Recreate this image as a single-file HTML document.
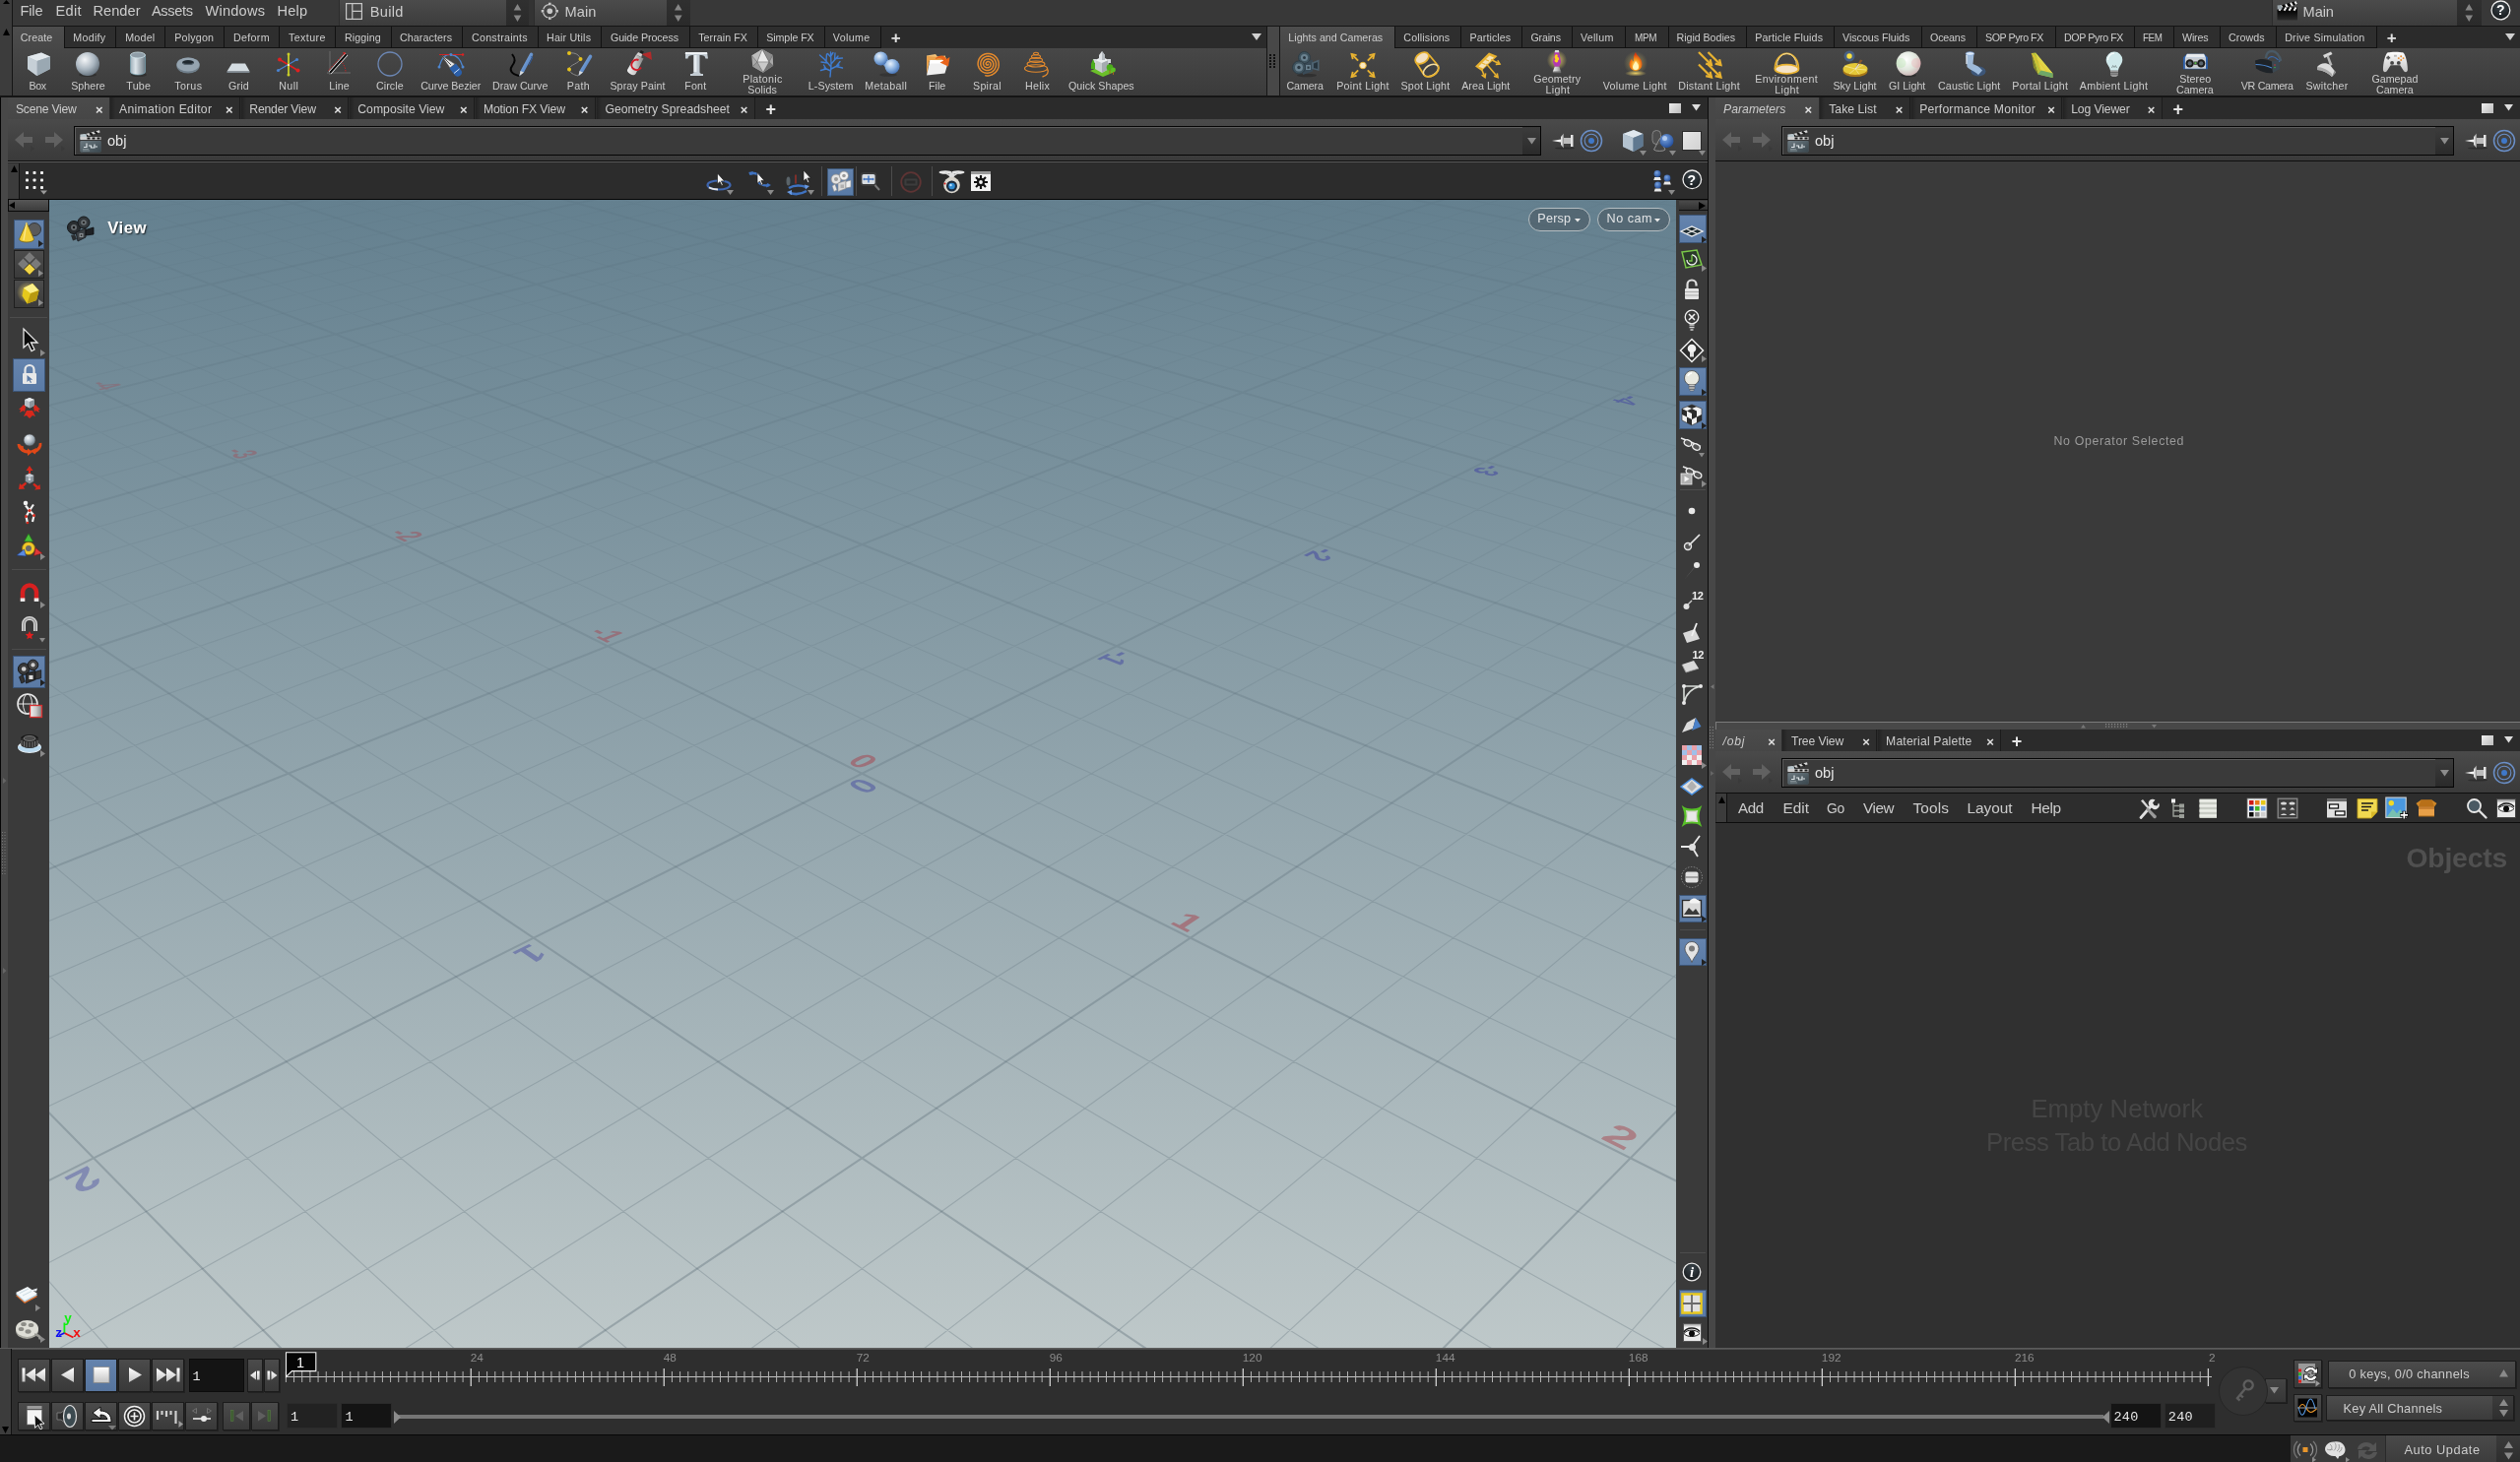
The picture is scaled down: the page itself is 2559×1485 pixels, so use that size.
<!DOCTYPE html>
<html lang="en"><head><meta charset="utf-8"><title>Houdini</title>
<style>
html,body{margin:0;padding:0;}
body{width:2559px;height:1485px;overflow:hidden;background:#3a3a3a;font-family:"Liberation Sans", sans-serif;position:relative;}
#app{position:absolute;left:0;top:0;width:2559px;height:1485px;overflow:hidden;will-change:transform;}
#app div,#app svg,#app span.t{position:absolute;box-sizing:border-box;}
#app svg{overflow:visible;}
span.t{white-space:nowrap;line-height:1;}
</style></head>
<body><div id="app">
<div style="left:0px;top:0px;width:2559px;height:26px;background:#383838;"></div>
<div style="left:0px;top:26px;width:2559px;height:1px;background:#151515;"></div>
<div style="left:0px;top:0px;width:12px;height:98px;background:#3c3c3c;"></div>
<div style="left:12px;top:0px;width:1px;height:98px;background:#151515;"></div>
<span class="t" style="top:4.45px;font-size:14.6px;color:#cccccc;left:20.50px;letter-spacing:-0.172px;">File</span>
<span class="t" style="top:4.45px;font-size:14.6px;color:#cccccc;left:56.50px;letter-spacing:0.281px;">Edit</span>
<span class="t" style="top:4.45px;font-size:14.6px;color:#cccccc;left:94.50px;letter-spacing:0.025px;">Render</span>
<span class="t" style="top:4.45px;font-size:14.6px;color:#cccccc;left:154.00px;letter-spacing:-0.359px;">Assets</span>
<span class="t" style="top:4.45px;font-size:14.6px;color:#cccccc;left:208.50px;letter-spacing:0.216px;">Windows</span>
<span class="t" style="top:4.45px;font-size:14.6px;color:#cccccc;left:281.50px;letter-spacing:0.161px;">Help</span>
<div style="left:344px;top:0px;width:192.5px;height:26px;background:linear-gradient(#4b4b4b,#3c3c3c);border-left:1px solid #2c2c2c;"></div>
<div style="left:513.5px;top:0px;width:23.0px;height:26px;background:linear-gradient(#303030,#2a2a2a);"></div>
<svg style="left:513.5px;top:0px;" width="23.0" height="26" viewBox="0 0 23.0 26"><path d="M7.7 10.5 l3.8 -6.5 l3.8 6.5z M7.7 15.5 l3.8 6.5 l3.8 -6.5z" fill="#858585"/></svg>
<span class="t" style="top:4.75px;font-size:14.6px;color:#cccccc;left:375.70px;letter-spacing:0.337px;">Build</span>
<div style="left:536.5px;top:0px;width:5.5px;height:26px;background:#333;"></div>
<div style="left:542px;top:0px;width:158.5px;height:26px;background:linear-gradient(#4b4b4b,#3c3c3c);border-left:1px solid #2c2c2c;"></div>
<div style="left:677px;top:0px;width:23.5px;height:26px;background:linear-gradient(#303030,#2a2a2a);"></div>
<svg style="left:677px;top:0px;" width="23.5" height="26" viewBox="0 0 23.5 26"><path d="M7.95 10.5 l3.8 -6.5 l3.8 6.5z M7.95 15.5 l3.8 6.5 l3.8 -6.5z" fill="#858585"/></svg>
<span class="t" style="top:4.75px;font-size:14.6px;color:#cccccc;left:573.60px;letter-spacing:0.020px;">Main</span>
<div style="left:2306.5px;top:0px;width:213.0px;height:26px;background:linear-gradient(#4b4b4b,#3c3c3c);border-left:1px solid #2c2c2c;"></div>
<div style="left:2495px;top:0px;width:24.5px;height:26px;background:linear-gradient(#303030,#2a2a2a);"></div>
<svg style="left:2495px;top:0px;" width="24.5" height="26" viewBox="0 0 24.5 26"><path d="M8.45 10.5 l3.8 -6.5 l3.8 6.5z M8.45 15.5 l3.8 6.5 l3.8 -6.5z" fill="#858585"/></svg>
<span class="t" style="top:4.75px;font-size:14.6px;color:#cccccc;left:2338.60px;letter-spacing:-0.080px;">Main</span>
<svg style="left:351px;top:3px;" width="17" height="17" viewBox="0 0 17 17"><rect x="0.600" y="0.600" width="15.800" height="15.800" fill="none" stroke="#c8c8c8" stroke-width="1.200"/><path d="M6.800 0.600v15.800M6.800 8.300h9.600" stroke="#c8c8c8" stroke-width="1.200"/></svg>
<svg style="left:548.5px;top:2px;" width="19" height="19" viewBox="0 0 19 19"><circle cx="9.300" cy="9.300" r="6.800" fill="none" stroke="#c8c8c8" stroke-width="1.200" stroke-dasharray="7.200 3.500" stroke-dashoffset="-1.800"/><circle cx="9.300" cy="9.300" r="2.800" fill="#c8c8c8"/><rect x="8" y="0.700" width="2.600" height="2.600" fill="#c8c8c8"/><rect x="8" y="15.300" width="2.600" height="2.600" fill="#c8c8c8"/><rect x="0.700" y="8" width="2.600" height="2.600" fill="#c8c8c8"/><rect x="15.300" y="8" width="2.600" height="2.600" fill="#c8c8c8"/></svg>
<svg style="left:2311.5px;top:0px;" width="22" height="22" viewBox="0 0 22 22"><defs><linearGradient id="gClapB" x1="0" y1="0" x2="0" y2="1"><stop offset="0" stop-color="#030303"/><stop offset="1" stop-color="#2c2c2c"/></linearGradient></defs><rect x="0.500" y="10.500" width="20.500" height="10" fill="url(#gClapB)"/><path d="M0.500 6.500l19.500 -5.500l0.800 3.200l-19.500 5.500z" fill="#0a0a0a"/><path d="M4 5.500l2 3.300M9 4.200l2 3.300M14 2.800l2 3.300M18.500 1.500l1.500 2.800" stroke="#f4f4f4" stroke-width="2"/><rect x="0.500" y="7.500" width="20.500" height="3.300" fill="#0a0a0a"/><path d="M4.500 7.500l-2 3.300M9.500 7.500l-2 3.300M14.500 7.500l-2 3.300M19.500 7.500l-2 3.300" stroke="#f4f4f4" stroke-width="2"/><path d="M0.500 5.500l4 -0.500l1 4.500h-5z" fill="#9aa4aa"/></svg>
<div style="left:13px;top:27px;width:1273px;height:22px;background:#2b2b2b;"></div>
<div style="left:13px;top:49px;width:1273px;height:48px;background:linear-gradient(#474747,#3b3b3b);"></div>
<div style="left:13px;top:27px;width:52px;height:23px;background:linear-gradient(#4d4d4d,#474747);"></div>
<span class="t" style="top:33.24px;font-size:10.7px;color:#cccccc;left:20.80px;letter-spacing:0.081px;">Create</span>
<div style="left:65px;top:27px;width:53px;height:22px;background:#2e2e2e;border:1px solid #111;border-top:none;"></div>
<span class="t" style="top:33.24px;font-size:10.7px;color:#cccccc;left:74.20px;letter-spacing:0.303px;">Modify</span>
<div style="left:117px;top:27px;width:51px;height:22px;background:#2e2e2e;border:1px solid #111;border-top:none;"></div>
<span class="t" style="top:33.24px;font-size:10.7px;color:#cccccc;left:127.20px;letter-spacing:0.223px;">Model</span>
<div style="left:167px;top:27px;width:61px;height:22px;background:#2e2e2e;border:1px solid #111;border-top:none;"></div>
<span class="t" style="top:33.24px;font-size:10.7px;color:#cccccc;left:177.20px;letter-spacing:0.196px;">Polygon</span>
<div style="left:227px;top:27px;width:57px;height:22px;background:#2e2e2e;border:1px solid #111;border-top:none;"></div>
<span class="t" style="top:33.24px;font-size:10.7px;color:#cccccc;left:237.00px;letter-spacing:0.311px;">Deform</span>
<div style="left:283px;top:27px;width:58px;height:22px;background:#2e2e2e;border:1px solid #111;border-top:none;"></div>
<span class="t" style="top:33.24px;font-size:10.7px;color:#cccccc;left:293.00px;letter-spacing:0.409px;">Texture</span>
<div style="left:340px;top:27px;width:58px;height:22px;background:#2e2e2e;border:1px solid #111;border-top:none;"></div>
<span class="t" style="top:33.24px;font-size:10.7px;color:#cccccc;left:350.00px;letter-spacing:0.075px;">Rigging</span>
<div style="left:397px;top:27px;width:73px;height:22px;background:#2e2e2e;border:1px solid #111;border-top:none;"></div>
<span class="t" style="top:33.24px;font-size:10.7px;color:#cccccc;left:406.00px;letter-spacing:0.080px;">Characters</span>
<div style="left:469px;top:27px;width:78px;height:22px;background:#2e2e2e;border:1px solid #111;border-top:none;"></div>
<span class="t" style="top:33.24px;font-size:10.7px;color:#cccccc;left:479.00px;letter-spacing:0.244px;">Constraints</span>
<div style="left:546px;top:27px;width:65px;height:22px;background:#2e2e2e;border:1px solid #111;border-top:none;"></div>
<span class="t" style="top:33.24px;font-size:10.7px;color:#cccccc;left:555.00px;letter-spacing:0.182px;">Hair Utils</span>
<div style="left:610px;top:27px;width:91px;height:22px;background:#2e2e2e;border:1px solid #111;border-top:none;"></div>
<span class="t" style="top:33.24px;font-size:10.7px;color:#cccccc;left:620.00px;letter-spacing:-0.092px;">Guide Process</span>
<div style="left:700px;top:27px;width:70px;height:22px;background:#2e2e2e;border:1px solid #111;border-top:none;"></div>
<span class="t" style="top:33.24px;font-size:10.7px;color:#cccccc;left:709.20px;letter-spacing:0.045px;">Terrain FX</span>
<div style="left:769px;top:27px;width:69px;height:22px;background:#2e2e2e;border:1px solid #111;border-top:none;"></div>
<span class="t" style="top:33.24px;font-size:10.7px;color:#cccccc;left:778.30px;letter-spacing:-0.112px;">Simple FX</span>
<div style="left:837px;top:27px;width:58px;height:22px;background:#2e2e2e;border:1px solid #111;border-top:none;"></div>
<span class="t" style="top:33.24px;font-size:10.7px;color:#cccccc;left:845.80px;letter-spacing:0.369px;">Volume</span>
<span class="t" style="top:30.11px;font-size:17px;color:#e0e0e0;left:909.70px;transform:translateX(-50%);font-weight:bold;">+</span>
<svg style="left:1270.5px;top:34px;" width="10" height="8" viewBox="0 0 10 8"><path d="M0 0h10l-5 7z" fill="#d0d0d0"/></svg>
<div style="left:1286px;top:27px;width:1px;height:71px;background:#151515;"></div>
<div style="left:1287px;top:27px;width:12px;height:71px;background:#484848;"></div>
<div style="left:1299px;top:27px;width:1px;height:71px;background:#151515;"></div>
<svg style="left:1289px;top:55px;" width="8" height="16" viewBox="0 0 8 16"><rect x="0" y="0" width="2" height="2" fill="#111"/><rect x="0" y="3" width="2" height="2" fill="#111"/><rect x="0" y="6" width="2" height="2" fill="#111"/><rect x="0" y="9" width="2" height="2" fill="#111"/><rect x="0" y="12" width="2" height="2" fill="#111"/><rect x="4" y="0" width="2" height="2" fill="#111"/><rect x="4" y="3" width="2" height="2" fill="#111"/><rect x="4" y="6" width="2" height="2" fill="#111"/><rect x="4" y="9" width="2" height="2" fill="#111"/><rect x="4" y="12" width="2" height="2" fill="#111"/></svg>
<div style="left:1300px;top:27px;width:1259px;height:22px;background:#2b2b2b;"></div>
<div style="left:1300px;top:49px;width:1259px;height:48px;background:linear-gradient(#474747,#3b3b3b);"></div>
<div style="left:1300px;top:27px;width:116px;height:23px;background:linear-gradient(#4d4d4d,#474747);"></div>
<span class="t" style="top:33.24px;font-size:10.7px;color:#cccccc;left:1308.30px;letter-spacing:0.014px;">Lights and Cameras</span>
<div style="left:1416px;top:27px;width:68px;height:22px;background:#2e2e2e;border:1px solid #111;border-top:none;"></div>
<span class="t" style="top:33.24px;font-size:10.7px;color:#cccccc;left:1425.30px;letter-spacing:0.128px;">Collisions</span>
<div style="left:1483px;top:27px;width:63px;height:22px;background:#2e2e2e;border:1px solid #111;border-top:none;"></div>
<span class="t" style="top:33.24px;font-size:10.7px;color:#cccccc;left:1492.50px;letter-spacing:0.089px;">Particles</span>
<div style="left:1545px;top:27px;width:52px;height:22px;background:#2e2e2e;border:1px solid #111;border-top:none;"></div>
<span class="t" style="top:33.24px;font-size:10.7px;color:#cccccc;left:1554.40px;letter-spacing:-0.177px;">Grains</span>
<div style="left:1596px;top:27px;width:55px;height:22px;background:#2e2e2e;border:1px solid #111;border-top:none;"></div>
<span class="t" style="top:33.24px;font-size:10.7px;color:#cccccc;left:1605.00px;letter-spacing:0.244px;">Vellum</span>
<div style="left:1650px;top:27px;width:45px;height:22px;background:#2e2e2e;border:1px solid #111;border-top:none;"></div>
<span class="t" style="top:33.24px;font-size:10.7px;color:#cccccc;left:1659.70px;transform-origin:0 0;transform:scaleX(0.9348);letter-spacing:-0.450px;">MPM</span>
<div style="left:1694px;top:27px;width:80px;height:22px;background:#2e2e2e;border:1px solid #111;border-top:none;"></div>
<span class="t" style="top:33.24px;font-size:10.7px;color:#cccccc;left:1702.50px;letter-spacing:-0.047px;">Rigid Bodies</span>
<div style="left:1773px;top:27px;width:90px;height:22px;background:#2e2e2e;border:1px solid #111;border-top:none;"></div>
<span class="t" style="top:33.24px;font-size:10.7px;color:#cccccc;left:1782.20px;letter-spacing:0.120px;">Particle Fluids</span>
<div style="left:1862px;top:27px;width:90px;height:22px;background:#2e2e2e;border:1px solid #111;border-top:none;"></div>
<span class="t" style="top:33.24px;font-size:10.7px;color:#cccccc;left:1871.00px;letter-spacing:-0.025px;">Viscous Fluids</span>
<div style="left:1951px;top:27px;width:57px;height:22px;background:#2e2e2e;border:1px solid #111;border-top:none;"></div>
<span class="t" style="top:33.24px;font-size:10.7px;color:#cccccc;left:1960.00px;letter-spacing:-0.169px;">Oceans</span>
<div style="left:2007px;top:27px;width:81px;height:22px;background:#2e2e2e;border:1px solid #111;border-top:none;"></div>
<span class="t" style="top:33.24px;font-size:10.7px;color:#cccccc;left:2016.40px;transform-origin:0 0;transform:scaleX(0.9974);letter-spacing:-0.450px;">SOP Pyro FX</span>
<div style="left:2087px;top:27px;width:81px;height:22px;background:#2e2e2e;border:1px solid #111;border-top:none;"></div>
<span class="t" style="top:33.24px;font-size:10.7px;color:#cccccc;left:2096.00px;letter-spacing:-0.405px;">DOP Pyro FX</span>
<div style="left:2167px;top:27px;width:41px;height:22px;background:#2e2e2e;border:1px solid #111;border-top:none;"></div>
<span class="t" style="top:33.24px;font-size:10.7px;color:#cccccc;left:2176.40px;transform-origin:0 0;transform:scaleX(0.9169);letter-spacing:-0.450px;">FEM</span>
<div style="left:2207px;top:27px;width:48px;height:22px;background:#2e2e2e;border:1px solid #111;border-top:none;"></div>
<span class="t" style="top:33.24px;font-size:10.7px;color:#cccccc;left:2216.00px;letter-spacing:-0.178px;">Wires</span>
<div style="left:2254px;top:27px;width:58px;height:22px;background:#2e2e2e;border:1px solid #111;border-top:none;"></div>
<span class="t" style="top:33.24px;font-size:10.7px;color:#cccccc;left:2263.00px;letter-spacing:0.073px;">Crowds</span>
<div style="left:2311px;top:27px;width:103px;height:22px;background:#2e2e2e;border:1px solid #111;border-top:none;"></div>
<span class="t" style="top:33.24px;font-size:10.7px;color:#cccccc;left:2320.20px;letter-spacing:0.219px;">Drive Simulation</span>
<span class="t" style="top:30.11px;font-size:17px;color:#e0e0e0;left:2428.80px;transform:translateX(-50%);font-weight:bold;">+</span>
<svg style="left:2543.5px;top:34px;" width="10" height="8" viewBox="0 0 10 8"><path d="M0 0h10l-5 7z" fill="#d0d0d0"/></svg>
<div style="left:0px;top:97px;width:2559px;height:2px;background:#151515;"></div>
<span class="t" style="top:82.24px;font-size:10.7px;color:#cccccc;left:29.40px;letter-spacing:-0.311px;">Box</span>
<span class="t" style="top:82.24px;font-size:10.7px;color:#cccccc;left:72.20px;letter-spacing:0.006px;">Sphere</span>
<span class="t" style="top:82.24px;font-size:10.7px;color:#cccccc;left:128.30px;letter-spacing:0.244px;">Tube</span>
<span class="t" style="top:82.24px;font-size:10.7px;color:#cccccc;left:177.20px;letter-spacing:0.415px;">Torus</span>
<span class="t" style="top:82.24px;font-size:10.7px;color:#cccccc;left:232.00px;letter-spacing:0.199px;">Grid</span>
<span class="t" style="top:82.24px;font-size:10.7px;color:#cccccc;left:283.30px;letter-spacing:0.359px;">Null</span>
<span class="t" style="top:82.24px;font-size:10.7px;color:#cccccc;left:334.20px;letter-spacing:0.094px;">Line</span>
<span class="t" style="top:82.24px;font-size:10.7px;color:#cccccc;left:382.00px;letter-spacing:0.074px;">Circle</span>
<span class="t" style="top:82.24px;font-size:10.7px;color:#cccccc;left:427.20px;letter-spacing:-0.062px;">Curve Bezier</span>
<span class="t" style="top:82.24px;font-size:10.7px;color:#cccccc;left:500.00px;letter-spacing:-0.002px;">Draw Curve</span>
<span class="t" style="top:82.24px;font-size:10.7px;color:#cccccc;left:575.80px;letter-spacing:0.267px;">Path</span>
<span class="t" style="top:82.24px;font-size:10.7px;color:#cccccc;left:619.40px;letter-spacing:0.095px;">Spray Paint</span>
<span class="t" style="top:82.24px;font-size:10.7px;color:#cccccc;left:695.30px;letter-spacing:0.170px;">Font</span>
<span class="t" style="top:82.24px;font-size:10.7px;color:#cccccc;left:820.80px;letter-spacing:0.066px;">L-System</span>
<span class="t" style="top:82.24px;font-size:10.7px;color:#cccccc;left:878.30px;letter-spacing:0.299px;">Metaball</span>
<span class="t" style="top:82.24px;font-size:10.7px;color:#cccccc;left:943.00px;letter-spacing:0.022px;">File</span>
<span class="t" style="top:82.24px;font-size:10.7px;color:#cccccc;left:988.00px;letter-spacing:0.274px;">Spiral</span>
<span class="t" style="top:82.24px;font-size:10.7px;color:#cccccc;left:1041.00px;letter-spacing:0.259px;">Helix</span>
<span class="t" style="top:82.24px;font-size:10.7px;color:#cccccc;left:1085.00px;letter-spacing:0.014px;">Quick Shapes</span>
<span class="t" style="top:82.24px;font-size:10.7px;color:#cccccc;left:1306.40px;letter-spacing:-0.083px;">Camera</span>
<span class="t" style="top:82.24px;font-size:10.7px;color:#cccccc;left:1357.20px;letter-spacing:0.288px;">Point Light</span>
<span class="t" style="top:82.24px;font-size:10.7px;color:#cccccc;left:1422.50px;letter-spacing:0.173px;">Spot Light</span>
<span class="t" style="top:82.24px;font-size:10.7px;color:#cccccc;left:1484.20px;letter-spacing:0.041px;">Area Light</span>
<span class="t" style="top:82.24px;font-size:10.7px;color:#cccccc;left:1627.80px;letter-spacing:0.264px;">Volume Light</span>
<span class="t" style="top:82.24px;font-size:10.7px;color:#cccccc;left:1704.20px;letter-spacing:0.257px;">Distant Light</span>
<span class="t" style="top:82.24px;font-size:10.7px;color:#cccccc;left:1861.40px;letter-spacing:0.029px;">Sky Light</span>
<span class="t" style="top:82.24px;font-size:10.7px;color:#cccccc;left:1918.00px;letter-spacing:-0.020px;">GI Light</span>
<span class="t" style="top:82.24px;font-size:10.7px;color:#cccccc;left:1968.00px;letter-spacing:0.125px;">Caustic Light</span>
<span class="t" style="top:82.24px;font-size:10.7px;color:#cccccc;left:2043.30px;letter-spacing:0.238px;">Portal Light</span>
<span class="t" style="top:82.24px;font-size:10.7px;color:#cccccc;left:2111.80px;letter-spacing:0.320px;">Ambient Light</span>
<span class="t" style="top:82.24px;font-size:10.7px;color:#cccccc;left:2275.80px;letter-spacing:-0.329px;">VR Camera</span>
<span class="t" style="top:82.24px;font-size:10.7px;color:#cccccc;left:2341.40px;letter-spacing:0.274px;">Switcher</span>
<span class="t" style="top:75.24px;font-size:10.7px;color:#cccccc;left:754.20px;letter-spacing:0.310px;">Platonic</span>
<span class="t" style="top:86.24px;font-size:10.7px;color:#cccccc;left:759.20px;letter-spacing:0.118px;">Solids</span>
<span class="t" style="top:75.24px;font-size:10.7px;color:#cccccc;left:1557.20px;letter-spacing:0.125px;">Geometry</span>
<span class="t" style="top:86.24px;font-size:10.7px;color:#cccccc;left:1569.40px;letter-spacing:0.353px;">Light</span>
<span class="t" style="top:75.24px;font-size:10.7px;color:#cccccc;left:1782.20px;letter-spacing:0.360px;">Environment</span>
<span class="t" style="top:86.24px;font-size:10.7px;color:#cccccc;left:1802.20px;letter-spacing:0.328px;">Light</span>
<span class="t" style="top:75.24px;font-size:10.7px;color:#cccccc;left:2213.30px;letter-spacing:0.080px;">Stereo</span>
<span class="t" style="top:86.24px;font-size:10.7px;color:#cccccc;left:2210.00px;letter-spacing:-0.043px;">Camera</span>
<span class="t" style="top:75.24px;font-size:10.7px;color:#cccccc;left:2408.40px;letter-spacing:0.010px;">Gamepad</span>
<span class="t" style="top:86.24px;font-size:10.7px;color:#cccccc;left:2413.00px;letter-spacing:-0.063px;">Camera</span>
<div style="left:0px;top:99px;width:8px;height:1272px;background:#484848;border-left:1px solid #050505;"></div>
<div style="left:8px;top:99px;width:1726px;height:22px;background:#2b2b2b;"></div>
<div style="left:8px;top:99px;width:103px;height:23px;background:linear-gradient(#4b4b4b,#464646);"></div>
<span class="t" style="top:104.90px;font-size:12.2px;color:#cccccc;left:16.00px;letter-spacing:-0.260px;">Scene View</span>
<span class="t" style="top:104.68px;font-size:13px;color:#e0e0e0;left:100.80px;transform:translateX(-50%);font-weight:bold;">×</span>
<div style="left:112px;top:99px;width:132px;height:22px;background:linear-gradient(90deg,#222 0,#2e2e2e 5px,#2e2e2e 100%);border-right:1px solid #1c1c1c;"></div>
<span class="t" style="top:104.90px;font-size:12.2px;color:#cccccc;left:121.00px;letter-spacing:0.305px;">Animation Editor</span>
<span class="t" style="top:104.68px;font-size:13px;color:#e0e0e0;left:232.80px;transform:translateX(-50%);font-weight:bold;">×</span>
<div style="left:245px;top:99px;width:109px;height:22px;background:linear-gradient(90deg,#222 0,#2e2e2e 5px,#2e2e2e 100%);border-right:1px solid #1c1c1c;"></div>
<span class="t" style="top:104.90px;font-size:12.2px;color:#cccccc;left:253.30px;letter-spacing:-0.186px;">Render View</span>
<span class="t" style="top:104.68px;font-size:13px;color:#e0e0e0;left:343.00px;transform:translateX(-50%);font-weight:bold;">×</span>
<div style="left:355px;top:99px;width:127px;height:22px;background:linear-gradient(90deg,#222 0,#2e2e2e 5px,#2e2e2e 100%);border-right:1px solid #1c1c1c;"></div>
<span class="t" style="top:104.90px;font-size:12.2px;color:#cccccc;left:363.30px;letter-spacing:0.020px;">Composite View</span>
<span class="t" style="top:104.68px;font-size:13px;color:#e0e0e0;left:470.80px;transform:translateX(-50%);font-weight:bold;">×</span>
<div style="left:483px;top:99px;width:122px;height:22px;background:linear-gradient(90deg,#222 0,#2e2e2e 5px,#2e2e2e 100%);border-right:1px solid #1c1c1c;"></div>
<span class="t" style="top:104.90px;font-size:12.2px;color:#cccccc;left:491.00px;letter-spacing:-0.163px;">Motion FX View</span>
<span class="t" style="top:104.68px;font-size:13px;color:#e0e0e0;left:593.60px;transform:translateX(-50%);font-weight:bold;">×</span>
<div style="left:606px;top:99px;width:161px;height:22px;background:linear-gradient(90deg,#222 0,#2e2e2e 5px,#2e2e2e 100%);border-right:1px solid #1c1c1c;"></div>
<span class="t" style="top:104.90px;font-size:12.2px;color:#cccccc;left:614.40px;letter-spacing:0.031px;">Geometry Spreadsheet</span>
<span class="t" style="top:104.68px;font-size:13px;color:#e0e0e0;left:755.60px;transform:translateX(-50%);font-weight:bold;">×</span>
<span class="t" style="top:101.72px;font-size:18px;color:#e6e6e6;left:782.80px;transform:translateX(-50%);font-weight:bold;">+</span>
<div style="left:1695px;top:105px;width:12px;height:10px;background:linear-gradient(135deg,#eee,#bbb);"></div>
<svg style="left:1718px;top:106px;" width="9" height="8" viewBox="0 0 9 8"><path d="M0 0h9l-4.5 6.5z" fill="#ddd"/></svg>
<div style="left:1742px;top:99px;width:817px;height:22px;background:#2b2b2b;"></div>
<div style="left:1742px;top:99px;width:105px;height:23px;background:linear-gradient(#4b4b4b,#464646);"></div>
<span class="t" style="top:104.90px;font-size:12.2px;color:#cccccc;left:1750.00px;font-style:italic;letter-spacing:0.033px;">Parameters</span>
<span class="t" style="top:104.68px;font-size:13px;color:#e0e0e0;left:1836.40px;transform:translateX(-50%);font-weight:bold;">×</span>
<div style="left:1848px;top:99px;width:92px;height:22px;background:linear-gradient(90deg,#222 0,#2e2e2e 5px,#2e2e2e 100%);border-right:1px solid #1c1c1c;"></div>
<span class="t" style="top:104.90px;font-size:12.2px;color:#cccccc;left:1857.20px;letter-spacing:0.036px;">Take List</span>
<span class="t" style="top:104.68px;font-size:13px;color:#e0e0e0;left:1928.60px;transform:translateX(-50%);font-weight:bold;">×</span>
<div style="left:1941px;top:99px;width:153px;height:22px;background:linear-gradient(90deg,#222 0,#2e2e2e 5px,#2e2e2e 100%);border-right:1px solid #1c1c1c;"></div>
<span class="t" style="top:104.90px;font-size:12.2px;color:#cccccc;left:1949.20px;letter-spacing:0.211px;">Performance Monitor</span>
<span class="t" style="top:104.68px;font-size:13px;color:#e0e0e0;left:2083.00px;transform:translateX(-50%);font-weight:bold;">×</span>
<div style="left:2095px;top:99px;width:101px;height:22px;background:linear-gradient(90deg,#222 0,#2e2e2e 5px,#2e2e2e 100%);border-right:1px solid #1c1c1c;"></div>
<span class="t" style="top:104.90px;font-size:12.2px;color:#cccccc;left:2103.20px;letter-spacing:-0.130px;">Log Viewer</span>
<span class="t" style="top:104.68px;font-size:13px;color:#e0e0e0;left:2184.50px;transform:translateX(-50%);font-weight:bold;">×</span>
<span class="t" style="top:101.72px;font-size:18px;color:#e6e6e6;left:2211.70px;transform:translateX(-50%);font-weight:bold;">+</span>
<div style="left:2520px;top:105px;width:12px;height:10px;background:linear-gradient(135deg,#eee,#bbb);"></div>
<svg style="left:2543px;top:106px;" width="9" height="8" viewBox="0 0 9 8"><path d="M0 0h9l-4.5 6.5z" fill="#ddd"/></svg>
<div style="left:1742px;top:741px;width:817px;height:22px;background:#2b2b2b;"></div>
<div style="left:1742px;top:741px;width:67px;height:23px;background:linear-gradient(#4b4b4b,#464646);"></div>
<span class="t" style="top:746.90px;font-size:12.2px;color:#cccccc;left:1749.50px;font-style:italic;letter-spacing:0.748px;">/obj</span>
<span class="t" style="top:746.68px;font-size:13px;color:#e0e0e0;left:1799.00px;transform:translateX(-50%);font-weight:bold;">×</span>
<div style="left:1810px;top:741px;width:96px;height:22px;background:linear-gradient(90deg,#222 0,#2e2e2e 5px,#2e2e2e 100%);border-right:1px solid #1c1c1c;"></div>
<span class="t" style="top:746.90px;font-size:12.2px;color:#cccccc;left:1819.00px;letter-spacing:-0.113px;">Tree View</span>
<span class="t" style="top:746.68px;font-size:13px;color:#e0e0e0;left:1895.00px;transform:translateX(-50%);font-weight:bold;">×</span>
<div style="left:1907px;top:741px;width:125px;height:22px;background:linear-gradient(90deg,#222 0,#2e2e2e 5px,#2e2e2e 100%);border-right:1px solid #1c1c1c;"></div>
<span class="t" style="top:746.90px;font-size:12.2px;color:#cccccc;left:1915.10px;letter-spacing:0.168px;">Material Palette</span>
<span class="t" style="top:746.68px;font-size:13px;color:#e0e0e0;left:2021.00px;transform:translateX(-50%);font-weight:bold;">×</span>
<span class="t" style="top:743.72px;font-size:18px;color:#e6e6e6;left:2048.00px;transform:translateX(-50%);font-weight:bold;">+</span>
<div style="left:2520px;top:747px;width:12px;height:10px;background:linear-gradient(135deg,#eee,#bbb);"></div>
<svg style="left:2543px;top:748px;" width="9" height="8" viewBox="0 0 9 8"><path d="M0 0h9l-4.5 6.5z" fill="#ddd"/></svg>
<svg width="0" height="0" style="left:0;top:0"><defs><linearGradient id="clg" x1="0" y1="0" x2="1" y2="1"><stop offset="0" stop-color="#6e7b82"/><stop offset="1" stop-color="#39464d"/></linearGradient></defs></svg>
<div style="left:8px;top:121px;width:1726px;height:42px;background:linear-gradient(#4a4a4a,#3a3a3a);"></div>
<div style="left:8px;top:163px;width:1726px;height:1px;background:#0e0e0e;"></div>
<svg style="left:14.5px;top:134.3px;" width="22" height="20" viewBox="0 0 22 20"><path d="M18 5h-9v-5l-9 8l9 8v-5h9z" fill="#616161"/><path d="M16 14l4 3l-4 3z" fill="#3a3a3a"/></svg>
<svg style="left:45.7px;top:134.3px;" width="22" height="20" viewBox="0 0 22 20"><path d="M0 5h9v-5l9 8l-9 8v-5h-9z" fill="#616161"/><path d="M16 14l4 3l-4 3z" fill="#3a3a3a"/></svg>
<div style="left:75px;top:128px;width:1490px;height:30px;background:#3a3a3a;border:1px solid #050505;box-shadow:inset 1px 1px 0 #5e5e5e;"></div>
<div style="left:1546px;top:129px;width:18px;height:28px;background:linear-gradient(#3c3c3c,#2a2a2a);"></div>
<svg style="left:1551px;top:140px;" width="9" height="7" viewBox="0 0 9 7"><path d="M0 0h9l-4.5 6.5z" fill="#8c8c8c"/></svg>
<svg style="left:81px;top:130.5px;" width="24" height="26" viewBox="0 0 24 26"><g transform="translate(0 0) scale(1)"><path d="M0.5 6.5 L20 1.2 L20.6 3.6 L1.2 8.9z" fill="#d8d8d8"/><path d="M5 5.3l3 2.2M10 4l3 2.2M15 2.6l3 2.2" stroke="#1a1a1a" stroke-width="2.2"/><path d="M0.5 5.5l6 -0.5l1.5 5.5h-7.5z" fill="#b9c6cc"/><rect x="0.5" y="8" width="21" height="3" fill="#cfcfcf"/><path d="M7.5 9.5h13" stroke="#1a1a1a" stroke-width="1.8" stroke-dasharray="3 2"/><rect x="0.5" y="12" width="21" height="11.5" rx="1" fill="#54636b"/><rect x="0.5" y="12" width="21" height="11.5" rx="1" fill="url(#clg)"/><path d="M4 18.5h3v-4M9 17h2.5v2h3.5v-3.5M16 18h2" stroke="#dfe5e8" stroke-width="1.2" fill="none"/><path d="M3 20.5h6M3 22h7" stroke="#8e999e" stroke-width="0.8"/></g></svg>
<span class="t" style="top:135.95px;font-size:14.6px;color:#e6e6e6;left:109.00px;letter-spacing:0.008px;">obj</span>
<div style="left:1742px;top:121px;width:817px;height:42px;background:linear-gradient(#4a4a4a,#3a3a3a);"></div>
<div style="left:1742px;top:163px;width:817px;height:1px;background:#0e0e0e;"></div>
<svg style="left:1748.5px;top:134.3px;" width="22" height="20" viewBox="0 0 22 20"><path d="M18 5h-9v-5l-9 8l9 8v-5h9z" fill="#616161"/><path d="M16 14l4 3l-4 3z" fill="#3a3a3a"/></svg>
<svg style="left:1779.7px;top:134.3px;" width="22" height="20" viewBox="0 0 22 20"><path d="M0 5h9v-5l9 8l-9 8v-5h-9z" fill="#616161"/><path d="M16 14l4 3l-4 3z" fill="#3a3a3a"/></svg>
<div style="left:1809px;top:128px;width:683px;height:30px;background:#3a3a3a;border:1px solid #050505;box-shadow:inset 1px 1px 0 #5e5e5e;"></div>
<div style="left:2473px;top:129px;width:18px;height:28px;background:linear-gradient(#3c3c3c,#2a2a2a);"></div>
<svg style="left:2478px;top:140px;" width="9" height="7" viewBox="0 0 9 7"><path d="M0 0h9l-4.5 6.5z" fill="#8c8c8c"/></svg>
<svg style="left:1815px;top:130.5px;" width="24" height="26" viewBox="0 0 24 26"><g transform="translate(0 0) scale(1)"><path d="M0.5 6.5 L20 1.2 L20.6 3.6 L1.2 8.9z" fill="#d8d8d8"/><path d="M5 5.3l3 2.2M10 4l3 2.2M15 2.6l3 2.2" stroke="#1a1a1a" stroke-width="2.2"/><path d="M0.5 5.5l6 -0.5l1.5 5.5h-7.5z" fill="#b9c6cc"/><rect x="0.5" y="8" width="21" height="3" fill="#cfcfcf"/><path d="M7.5 9.5h13" stroke="#1a1a1a" stroke-width="1.8" stroke-dasharray="3 2"/><rect x="0.5" y="12" width="21" height="11.5" rx="1" fill="#54636b"/><rect x="0.5" y="12" width="21" height="11.5" rx="1" fill="url(#clg)"/><path d="M4 18.5h3v-4M9 17h2.5v2h3.5v-3.5M16 18h2" stroke="#dfe5e8" stroke-width="1.2" fill="none"/><path d="M3 20.5h6M3 22h7" stroke="#8e999e" stroke-width="0.8"/></g></svg>
<span class="t" style="top:135.95px;font-size:14.6px;color:#e6e6e6;left:1843.00px;letter-spacing:0.008px;">obj</span>
<div style="left:1742px;top:763px;width:817px;height:42px;background:linear-gradient(#4a4a4a,#3a3a3a);"></div>
<div style="left:1742px;top:805px;width:817px;height:1px;background:#0e0e0e;"></div>
<svg style="left:1748.5px;top:776.3px;" width="22" height="20" viewBox="0 0 22 20"><path d="M18 5h-9v-5l-9 8l9 8v-5h9z" fill="#616161"/><path d="M16 14l4 3l-4 3z" fill="#3a3a3a"/></svg>
<svg style="left:1779.7px;top:776.3px;" width="22" height="20" viewBox="0 0 22 20"><path d="M0 5h9v-5l9 8l-9 8v-5h-9z" fill="#616161"/><path d="M16 14l4 3l-4 3z" fill="#3a3a3a"/></svg>
<div style="left:1809px;top:770px;width:683px;height:30px;background:#3a3a3a;border:1px solid #050505;box-shadow:inset 1px 1px 0 #5e5e5e;"></div>
<div style="left:2473px;top:771px;width:18px;height:28px;background:linear-gradient(#3c3c3c,#2a2a2a);"></div>
<svg style="left:2478px;top:782px;" width="9" height="7" viewBox="0 0 9 7"><path d="M0 0h9l-4.5 6.5z" fill="#8c8c8c"/></svg>
<svg style="left:1815px;top:772.5px;" width="24" height="26" viewBox="0 0 24 26"><g transform="translate(0 0) scale(1)"><path d="M0.5 6.5 L20 1.2 L20.6 3.6 L1.2 8.9z" fill="#d8d8d8"/><path d="M5 5.3l3 2.2M10 4l3 2.2M15 2.6l3 2.2" stroke="#1a1a1a" stroke-width="2.2"/><path d="M0.5 5.5l6 -0.5l1.5 5.5h-7.5z" fill="#b9c6cc"/><rect x="0.5" y="8" width="21" height="3" fill="#cfcfcf"/><path d="M7.5 9.5h13" stroke="#1a1a1a" stroke-width="1.8" stroke-dasharray="3 2"/><rect x="0.5" y="12" width="21" height="11.5" rx="1" fill="#54636b"/><rect x="0.5" y="12" width="21" height="11.5" rx="1" fill="url(#clg)"/><path d="M4 18.5h3v-4M9 17h2.5v2h3.5v-3.5M16 18h2" stroke="#dfe5e8" stroke-width="1.2" fill="none"/><path d="M3 20.5h6M3 22h7" stroke="#8e999e" stroke-width="0.8"/></g></svg>
<span class="t" style="top:777.95px;font-size:14.6px;color:#e6e6e6;left:1843.00px;letter-spacing:0.008px;">obj</span>
<div style="left:1734px;top:99px;width:1px;height:1271px;background:#0c0c0c;"></div>
<div style="left:1735px;top:99px;width:7px;height:1271px;background:#474747;"></div>
<div style="left:1742px;top:733px;width:817px;height:8px;background:#484848;border-top:1px solid #7a7a7a;border-left:1px solid #7a7a7a;"></div>
<div style="left:8px;top:164px;width:1726px;height:1px;background:#5a5a5a;"></div>
<div style="left:8px;top:165px;width:1726px;height:37px;background:#2c2c2c;"></div>
<div style="left:8px;top:166px;width:12px;height:36px;background:#3c3c3c;border-right:1px solid #111;"></div>
<div style="left:8px;top:202px;width:1726px;height:1px;background:#050505;"></div>
<div style="left:8px;top:203px;width:41px;height:1166px;background:#3a3a3a;"></div>
<div style="left:8px;top:203px;width:42px;height:12px;background:linear-gradient(#565656,#3c3c3c);border:1px solid #0a0a0a;border-top:none;"></div>
<div style="left:1702px;top:203px;width:32px;height:1166px;background:#3a3a3a;"></div>
<div style="left:1705px;top:204px;width:29px;height:10px;background:linear-gradient(#4a4a4a,#333);border-bottom:1px solid #111;"></div>
<svg style="left:50px;top:203px;overflow:hidden;font-family:'Liberation Sans',sans-serif" width="1652" height="1166" viewBox="0 0 1652 1166"><defs><linearGradient id="vg" x1="0" y1="0" x2="0" y2="1"><stop offset="0" stop-color="#64808f"/><stop offset="1" stop-color="#bec8c9"/></linearGradient></defs><rect width="1652" height="1166" fill="url(#vg)"/><defs><linearGradient id="lgm" gradientUnits="userSpaceOnUse" x1="0" y1="0" x2="0" y2="1166"><stop offset="0" stop-color="#3c4f5c" stop-opacity="0.05"/><stop offset="0.3" stop-color="#3c4f5c" stop-opacity="0.095"/><stop offset="0.7" stop-color="#3c4f5c" stop-opacity="0.20"/><stop offset="1" stop-color="#3c4f5c" stop-opacity="0.24"/></linearGradient><linearGradient id="lgM" gradientUnits="userSpaceOnUse" x1="0" y1="0" x2="0" y2="1166"><stop offset="0" stop-color="#3c4f5c" stop-opacity="0.08"/><stop offset="0.3" stop-color="#3c4f5c" stop-opacity="0.135"/><stop offset="0.7" stop-color="#3c4f5c" stop-opacity="0.25"/><stop offset="1" stop-color="#3c4f5c" stop-opacity="0.29"/></linearGradient></defs><path d="M896.7 -333.1L-27661.6 2675.7M754.1 -333.1L29312.4 2675.7M909.0 -331.8L-27333.2 2675.7M741.8 -331.8L28983.9 2675.7M921.4 -330.6L-27004.7 2675.7M729.4 -330.6L28655.5 2675.7M934.0 -329.4L-26676.2 2675.7M716.8 -329.4L28327.0 2675.7M959.5 -326.8L-26019.3 2675.7M691.3 -326.8L27670.1 2675.7M972.5 -325.5L-25690.8 2675.7M678.3 -325.5L27341.6 2675.7M985.6 -324.2L-25362.4 2675.7M665.2 -324.2L27013.2 2675.7M998.8 -322.9L-25033.9 2675.7M651.9 -322.9L26684.7 2675.7M1025.8 -320.3L-24377.0 2675.7M625.0 -320.3L26027.8 2675.7M1039.5 -318.9L-24048.5 2675.7M611.3 -318.9L25699.3 2675.7M1053.3 -317.5L-23720.1 2675.7M597.5 -317.5L25370.8 2675.7M1067.3 -316.2L-23391.6 2675.7M583.5 -316.2L25042.4 2675.7M1095.8 -313.3L-22734.7 2675.7M555.0 -313.3L24385.4 2675.7M1110.3 -311.9L-22406.2 2675.7M540.5 -311.9L24057.0 2675.7M1124.9 -310.5L-22077.7 2675.7M525.9 -310.5L23728.5 2675.7M1139.7 -309.0L-21749.3 2675.7M511.1 -309.0L23400.1 2675.7M1169.8 -306.0L-21092.3 2675.7M481.0 -306.0L22743.1 2675.7M1185.1 -304.5L-20763.9 2675.7M465.7 -304.5L22414.7 2675.7M1200.6 -303.0L-20435.4 2675.7M450.2 -303.0L22086.2 2675.7M1216.3 -301.4L-20107.0 2675.7M434.5 -301.4L21757.7 2675.7M1248.2 -298.2L-19450.0 2675.7M402.5 -298.2L21100.8 2675.7M1264.5 -296.6L-19121.6 2675.7M386.3 -296.6L20772.3 2675.7M1280.9 -295.0L-18793.1 2675.7M369.9 -295.0L20443.9 2675.7M1297.6 -293.4L-18464.6 2675.7M353.2 -293.4L20115.4 2675.7M1331.5 -290.0L-17807.7 2675.7M319.3 -290.0L19458.5 2675.7M1348.7 -288.3L-17479.2 2675.7M302.1 -288.3L19130.0 2675.7M1366.2 -286.6L-17150.8 2675.7M284.6 -286.6L18801.6 2675.7M1383.9 -284.8L-16822.3 2675.7M266.9 -284.8L18473.1 2675.7M1419.9 -281.2L-16165.4 2675.7M230.9 -281.2L17816.2 2675.7M1438.3 -279.4L-15836.9 2675.7M212.5 -279.4L17487.7 2675.7M1456.9 -277.6L-15508.5 2675.7M193.9 -277.6L17159.2 2675.7M1475.7 -275.7L-15180.0 2675.7M175.0 -275.7L16830.8 2675.7M1514.2 -271.9L-14523.1 2675.7M136.6 -271.9L16173.8 2675.7M1533.8 -270.0L-14194.6 2675.7M117.0 -270.0L15845.4 2675.7M1553.6 -268.0L-13866.1 2675.7M97.2 -268.0L15516.9 2675.7M1573.7 -266.0L-13537.7 2675.7M77.1 -266.0L15188.4 2675.7M1614.8 -261.9L-12880.7 2675.7M36.0 -261.9L14531.5 2675.7M1635.7 -259.9L-12552.3 2675.7M15.1 -259.9L14203.1 2675.7M1656.9 -257.8L-12223.8 2675.7M-6.1 -257.8L13874.6 2675.7M1678.4 -255.6L-11895.3 2675.7M-27.6 -255.6L13546.1 2675.7M1722.4 -251.3L-11238.4 2675.7M-71.6 -251.3L12889.2 2675.7M1744.8 -249.1L-10910.0 2675.7M-94.0 -249.1L12560.7 2675.7M1767.5 -246.8L-10581.5 2675.7M-116.7 -246.8L12232.3 2675.7M1790.6 -244.5L-10253.0 2675.7M-139.8 -244.5L11903.8 2675.7M1837.7 -239.9L-9596.1 2675.7M-187.0 -239.9L11246.9 2675.7M1861.8 -237.5L-9267.6 2675.7M-211.0 -237.5L10918.4 2675.7M1886.2 -235.1L-8939.2 2675.7M-235.5 -235.1L10589.9 2675.7M1911.0 -232.6L-8610.7 2675.7M-260.3 -232.6L10261.5 2675.7M1961.7 -227.6L-7953.8 2675.7M-311.0 -227.6L9604.6 2675.7M1987.7 -225.0L-7625.3 2675.7M-336.9 -225.0L9276.1 2675.7M2014.0 -222.4L-7296.8 2675.7M-363.2 -222.4L8947.6 2675.7M2040.7 -219.8L-6968.4 2675.7M-389.9 -219.8L8619.2 2675.7M2095.4 -214.4L-6311.5 2675.7M-444.6 -214.4L7962.2 2675.7M2123.4 -211.6L-5983.0 2675.7M-472.6 -211.6L7633.8 2675.7M2151.9 -208.8L-5654.5 2675.7M-501.1 -208.8L7305.3 2675.7M2180.7 -205.9L-5326.1 2675.7M-530.0 -205.9L6976.8 2675.7M2239.9 -200.0L-4669.1 2675.7M-589.1 -200.0L6319.9 2675.7M2270.2 -197.0L-4340.7 2675.7M-619.5 -197.0L5991.4 2675.7M2301.1 -194.0L-4012.2 2675.7M-650.3 -194.0L5663.0 2675.7M2332.4 -190.9L-3683.7 2675.7M-681.6 -190.9L5334.5 2675.7M2396.6 -184.5L-3026.8 2675.7M-745.8 -184.5L4677.6 2675.7M2429.6 -181.3L-2698.3 2675.7M-778.8 -181.3L4349.1 2675.7M2463.1 -177.9L-2369.9 2675.7M-812.3 -177.9L4020.7 2675.7M2497.2 -174.6L-2041.4 2675.7M-846.4 -174.6L3692.2 2675.7M2567.1 -167.6L-1384.5 2675.7M-916.4 -167.6L3035.3 2675.7M2603.1 -164.1L-1056.0 2675.7M-952.3 -164.1L2706.8 2675.7M2639.6 -160.5L-727.6 2675.7M-988.9 -160.5L2378.3 2675.7M2676.9 -156.8L-399.1 2675.7M-1026.1 -156.8L2049.9 2675.7M2753.4 -149.2L257.8 2675.7M-1102.6 -149.2L1393.0 2675.7M2792.7 -145.3L586.3 2675.7M-1141.9 -145.3L1064.5 2675.7M2832.8 -141.3L914.8 2675.7M-1182.0 -141.3L736.0 2675.7M2873.6 -137.3L1243.2 2675.7M-1222.8 -137.3L407.6 2675.7M2957.6 -129.0L1900.2 2675.7M-1306.8 -129.0L-249.4 2675.7M3000.9 -124.7L2228.6 2675.7M-1350.1 -124.7L-577.8 2675.7M3045.0 -120.3L2557.1 2675.7M-1394.2 -120.3L-906.3 2675.7M3089.9 -115.9L2885.5 2675.7M-1439.1 -115.9L-1234.8 2675.7M3182.6 -106.7L3542.5 2675.7M-1531.8 -106.7L-1891.7 2675.7M3230.4 -102.0L3870.9 2675.7M-1579.6 -102.0L-2220.2 2675.7M3279.1 -97.1L4199.4 2675.7M-1628.4 -97.1L-2548.6 2675.7M3328.9 -92.2L4527.9 2675.7M-1678.1 -92.2L-2877.1 2675.7" stroke="url(#lgm)" stroke-width="1.15" fill="none"/><path d="M884.5 -334.3L-27990.1 2675.7M766.3 -334.3L29640.9 2675.7M946.7 -328.1L-26347.8 2675.7M704.1 -328.1L27998.6 2675.7M1012.2 -321.6L-24705.4 2675.7M638.5 -321.6L26356.2 2675.7M1081.5 -314.8L-23063.1 2675.7M569.3 -314.8L24713.9 2675.7M1154.7 -307.5L-21420.8 2675.7M496.1 -307.5L23071.6 2675.7M1232.2 -299.8L-19778.5 2675.7M418.6 -299.8L21429.3 2675.7M1314.4 -291.7L-18136.2 2675.7M336.4 -291.7L19786.9 2675.7M1401.8 -283.0L-16493.8 2675.7M249.0 -283.0L18144.6 2675.7M1494.8 -273.8L-14851.5 2675.7M155.9 -273.8L16502.3 2675.7M1594.1 -264.0L-13209.2 2675.7M56.7 -264.0L14860.0 2675.7M1700.2 -253.5L-11566.9 2675.7M-49.5 -253.5L13217.7 2675.7M1814.0 -242.2L-9924.6 2675.7M-163.2 -242.2L11575.3 2675.7M1936.2 -230.1L-8282.2 2675.7M-285.4 -230.1L9933.0 2675.7M2067.9 -217.1L-6639.9 2675.7M-417.1 -217.1L8290.7 2675.7M2210.1 -203.0L-4997.6 2675.7M-559.3 -203.0L6648.4 2675.7M2364.2 -187.7L-3355.3 2675.7M-713.5 -187.7L5006.1 2675.7M2531.8 -171.1L-1713.0 2675.7M-881.1 -171.1L3363.7 2675.7M2714.8 -153.0L-70.6 2675.7M-1064.0 -153.0L1721.4 2675.7M2915.2 -133.2L1571.7 2675.7M-1264.4 -133.2L79.1 2675.7M3135.8 -111.3L3214.0 2675.7M-1485.0 -111.3L-1563.2 2675.7M3379.8 -87.2L4856.3 2675.7M-1729.0 -87.2L-3205.5 2675.7" stroke="url(#lgM)" stroke-width="2.1" fill="none"/><text transform="matrix(0.1330 0.0664 -0.3011 0.0664 -64.6 135.0)" font-size="100.0" font-weight="bold" text-anchor="end" fill="#a8404a" fill-opacity="0.25">-5</text><text transform="matrix(-0.1333 0.0669 -0.3026 -0.0669 1718.0 137.9)" font-size="100.0" font-weight="bold" text-anchor="start" fill="#464ba0" fill-opacity="0.55">-5</text><text transform="matrix(0.1511 0.0754 -0.3040 0.0754 53.6 194.0)" font-size="100.0" font-weight="bold" text-anchor="end" fill="#a8404a" fill-opacity="0.30">-4</text><text transform="matrix(-0.1515 0.0761 -0.3056 -0.0761 1599.6 197.4)" font-size="100.0" font-weight="bold" text-anchor="start" fill="#464ba0" fill-opacity="0.60">-4</text><text transform="matrix(0.1709 0.0853 -0.3006 0.0853 193.3 263.7)" font-size="100.0" font-weight="bold" text-anchor="end" fill="#a8404a" fill-opacity="0.36">-3</text><text transform="matrix(-0.1715 0.0861 -0.3023 -0.0861 1459.3 267.9)" font-size="100.0" font-weight="bold" text-anchor="start" fill="#464ba0" fill-opacity="0.60">-3</text><text transform="matrix(0.1960 0.0978 -0.2952 0.0978 361.3 347.6)" font-size="100.0" font-weight="bold" text-anchor="end" fill="#a8404a" fill-opacity="0.42">-2</text><text transform="matrix(-0.1969 0.0989 -0.2970 -0.0989 1290.6 352.6)" font-size="100.0" font-weight="bold" text-anchor="start" fill="#464ba0" fill-opacity="0.58">-2</text><text transform="matrix(0.2287 0.1142 -0.2867 0.1142 566.9 450.2)" font-size="100.0" font-weight="bold" text-anchor="end" fill="#a8404a" fill-opacity="0.46">-1</text><text transform="matrix(-0.2301 0.1155 -0.2884 -0.1155 1083.9 456.4)" font-size="100.0" font-weight="bold" text-anchor="start" fill="#464ba0" fill-opacity="0.54">-1</text><text transform="matrix(0.2785 0.1390 -0.2787 0.1390 824.5 578.8)" font-size="100.0" font-weight="bold" text-anchor="end" fill="#a8404a" fill-opacity="0.50">0</text><text transform="matrix(-0.2807 0.1409 -0.2804 -0.1409 824.5 586.6)" font-size="100.0" font-weight="bold" text-anchor="start" fill="#464ba0" fill-opacity="0.50">0</text><text transform="matrix(0.3573 0.1783 -0.2673 0.1783 1156.6 744.5)" font-size="100.0" font-weight="bold" text-anchor="end" fill="#a8404a" fill-opacity="0.50">1</text><text transform="matrix(-0.3607 0.1812 -0.2687 -0.1812 489.6 754.8)" font-size="100.0" font-weight="bold" text-anchor="start" fill="#464ba0" fill-opacity="0.47">1</text><text transform="matrix(0.4779 0.2385 -0.2367 0.2385 1600.9 966.3)" font-size="100.0" font-weight="bold" text-anchor="end" fill="#a8404a" fill-opacity="0.48">2</text><text transform="matrix(-0.4838 0.2430 -0.2374 -0.2430 40.3 980.4)" font-size="100.0" font-weight="bold" text-anchor="start" fill="#464ba0" fill-opacity="0.44">2</text></svg>
<div style="left:1742px;top:164px;width:817px;height:569px;background:#3a3a3a;"></div>
<span class="t" style="top:441.72px;font-size:12.4px;color:#9a9a9a;left:2151.82px;transform:translateX(-50%);letter-spacing:0.640px;">No Operator Selected</span>
<div style="left:1742px;top:806px;width:817px;height:30px;background:#2d2d2d;"></div>
<div style="left:1743px;top:806px;width:11px;height:29px;background:#3c3c3c;border-right:1px solid #111;"></div>
<div style="left:1742px;top:835px;width:817px;height:1px;background:#0c0c0c;"></div>
<div style="left:1742px;top:836px;width:817px;height:534px;background:#303030;"></div>
<span class="t" style="top:812.54px;font-size:15.4px;color:#cccccc;left:1765.30px;transform-origin:0 0;transform:scaleX(0.9850);letter-spacing:-0.450px;">Add</span>
<span class="t" style="top:812.54px;font-size:15.4px;color:#cccccc;left:1810.50px;letter-spacing:-0.010px;">Edit</span>
<span class="t" style="top:812.54px;font-size:15.4px;color:#cccccc;left:1855.30px;transform-origin:0 0;transform:scaleX(0.9042);letter-spacing:-0.450px;">Go</span>
<span class="t" style="top:812.54px;font-size:15.4px;color:#cccccc;left:1892.00px;transform-origin:0 0;transform:scaleX(0.9922);letter-spacing:-0.450px;">View</span>
<span class="t" style="top:812.54px;font-size:15.4px;color:#cccccc;left:1942.50px;letter-spacing:0.141px;">Tools</span>
<span class="t" style="top:812.54px;font-size:15.4px;color:#cccccc;left:1997.50px;letter-spacing:-0.044px;">Layout</span>
<span class="t" style="top:812.54px;font-size:15.4px;color:#cccccc;left:2062.50px;letter-spacing:-0.385px;">Help</span>
<span class="t" style="top:856.81px;font-size:28.3px;color:#505050;left:2443.40px;font-weight:bold;letter-spacing:-0.149px;">Objects</span>
<span class="t" style="top:1114.34px;font-size:25.7px;color:#454545;left:2062.40px;letter-spacing:0.037px;">Empty Network</span>
<span class="t" style="top:1148.04px;font-size:25.7px;color:#454545;left:2017.30px;transform-origin:0 0;transform:scaleX(0.9990);letter-spacing:-0.450px;">Press Tab to Add Nodes</span>
<div style="left:0px;top:1369px;width:2559px;height:2px;background:linear-gradient(#626262,#484848);"></div>
<div style="left:0px;top:1371px;width:2559px;height:86px;background:#2e2e2e;"></div>
<div style="left:0px;top:1370px;width:12px;height:87px;background:#3c3c3c;border-right:1px solid #111;"></div>
<div style="left:0px;top:1457px;width:2559px;height:1px;background:#070707;"></div>
<div style="left:0px;top:1458px;width:2559px;height:27px;background:#1a1a1a;"></div>
<svg style="left:2.5px;top:0px;" width="7" height="4" viewBox="0 0 7 4"><path d="M0 4L3.5 0L7 4z" fill="#000"/></svg>
<svg style="left:3px;top:29px;" width="7" height="7" viewBox="0 0 7 7"><path d="M0 7L3.5 0L7 7z" fill="#000"/></svg>
<svg style="left:10.5px;top:168px;" width="7" height="7" viewBox="0 0 7 7"><path d="M0 7L3.5 0L7 7z" fill="#000"/></svg>
<svg style="left:9px;top:205px;" width="6" height="7" viewBox="0 0 6 7"><path d="M6 0L0 3.5L6 7z" fill="#000"/></svg>
<svg style="left:1725px;top:205px;" width="7" height="8" viewBox="0 0 7 8"><path d="M0 0L7 4.0L0 8z" fill="#000"/></svg>
<svg style="left:1745px;top:809px;" width="7" height="7" viewBox="0 0 7 7"><path d="M0 7L3.5 0L7 7z" fill="#000"/></svg>
<svg style="left:2px;top:1449px;" width="7" height="7" viewBox="0 0 7 7"><path d="M0 0L3.5 7L7 0z" fill="#000"/></svg>
<svg width="0" height="0" style="left:0;top:0"><defs>
<radialGradient id="gSph" cx="0.38" cy="0.32" r="0.75"><stop offset="0" stop-color="#f4f6f8"/><stop offset="0.55" stop-color="#aab6c0"/><stop offset="1" stop-color="#5d6a75"/></radialGradient>
<radialGradient id="gBlu" cx="0.38" cy="0.32" r="0.75"><stop offset="0" stop-color="#e8f1fb"/><stop offset="0.5" stop-color="#8db3e0"/><stop offset="1" stop-color="#3d6bb0"/></radialGradient>
<radialGradient id="gGI" cx="0.4" cy="0.35" r="0.75"><stop offset="0" stop-color="#ffffff"/><stop offset="0.55" stop-color="#dfe6dc"/><stop offset="1" stop-color="#c9a9ac"/></radialGradient>
<linearGradient id="gCyl" x1="0" y1="0" x2="1" y2="0"><stop offset="0" stop-color="#9fb0bb"/><stop offset="0.35" stop-color="#dde5ea"/><stop offset="1" stop-color="#6d7a84"/></linearGradient>
<linearGradient id="gBtn" x1="0" y1="0" x2="0" y2="1"><stop offset="0" stop-color="#4a4a4a"/><stop offset="1" stop-color="#333"/></linearGradient>
<linearGradient id="gPen" x1="0" y1="0" x2="1" y2="1"><stop offset="0" stop-color="#9cc3ee"/><stop offset="1" stop-color="#2f5fa8"/></linearGradient>
<linearGradient id="gMet" x1="0" y1="0" x2="1" y2="0"><stop offset="0" stop-color="#f2f2f2"/><stop offset="0.5" stop-color="#c9c9c9"/><stop offset="1" stop-color="#808080"/></linearGradient>
<linearGradient id="gWh" x1="0" y1="0" x2="0" y2="1"><stop offset="0" stop-color="#ffffff"/><stop offset="1" stop-color="#c4c4c4"/></linearGradient>
<radialGradient id="gFire" cx="0.5" cy="0.7" r="0.6"><stop offset="0" stop-color="#fff3a0"/><stop offset="0.5" stop-color="#f79a1c"/><stop offset="1" stop-color="#d8350f"/></radialGradient>
<radialGradient id="gGlow" cx="0.5" cy="0.5" r="0.5"><stop offset="0" stop-color="#f6d96a" stop-opacity="0.9"/><stop offset="1" stop-color="#f6d96a" stop-opacity="0"/></radialGradient>
</defs></svg>
<svg style="left:1312px;top:51px;" width="28" height="28" viewBox="0 0 28 28"><ellipse cx="15" cy="25.500" rx="10" ry="1.800" fill="#1c1c1c" opacity="0.450"/><path d="M11 13l10 -3.500v12l-10 3.500z" fill="#3a4b57"/><path d="M20 12.500l7.500 -3v11.500l-7.500 -2z" fill="#4d6270"/><path d="M22 13.500l4 -1.600v7l-4 -1z" fill="#27343d"/><circle cx="12.500" cy="7.500" r="6" fill="#40545f" stroke="#2a3842" stroke-width="0.800"/><circle cx="12.500" cy="7.500" r="3.600" fill="#6b8290"/><circle cx="12.500" cy="7.500" r="1.500" fill="#2a3842"/><circle cx="7" cy="17.500" r="6.500" fill="#40545f" stroke="#2a3842" stroke-width="0.800"/><circle cx="7" cy="17.500" r="4" fill="#6b8290"/><circle cx="7" cy="17.500" r="1.700" fill="#2a3842"/><rect x="14" y="15" width="5" height="5" fill="#6b8290"/><rect x="15.500" y="16.500" width="2.200" height="2.200" fill="#27343d"/></svg>
<svg style="left:1370px;top:51.5px;" width="28" height="28" viewBox="0 0 28 28"><path d="M9.2 9.7L2.5 3" stroke="#e8b230" stroke-width="1.8"/><path d="M7.6 4.2L2.5 3L3.7 8.1" fill="none" stroke="#e8b230" stroke-width="1.8" stroke-linejoin="miter"/><path d="M18.8 9.7L25.5 3" stroke="#e8b230" stroke-width="1.8"/><path d="M24.3 8.1L25.5 3L20.4 4.2" fill="none" stroke="#e8b230" stroke-width="1.8" stroke-linejoin="miter"/><path d="M9.2 19.3L2.5 26" stroke="#e8b230" stroke-width="1.8"/><path d="M3.7 20.9L2.5 26L7.6 24.8" fill="none" stroke="#e8b230" stroke-width="1.8" stroke-linejoin="miter"/><path d="M18.8 19.3L25.5 26" stroke="#e8b230" stroke-width="1.8"/><path d="M20.4 24.8L25.5 26L24.3 20.9" fill="none" stroke="#e8b230" stroke-width="1.8" stroke-linejoin="miter"/><circle cx="14" cy="14.500" r="3.300" fill="#fbe9c0" stroke="#e8b230" stroke-width="1"/></svg>
<svg style="left:1433.5px;top:51.5px;" width="28" height="28" viewBox="0 0 28 28"><path d="M3.500 10.500L12 24M17 3.500L26.500 15" stroke="#e8b230" stroke-width="1.800"/><ellipse cx="19" cy="19.500" rx="8.300" ry="5.300" transform="rotate(-32 19 19.500)" fill="none" stroke="#f3dca0" stroke-width="1.500"/><path d="M12 24a8.300 5.300 -32 0 0 14.500 -9" fill="none" stroke="#e8b230" stroke-width="1.800"/><ellipse cx="10" cy="7" rx="7.500" ry="5" transform="rotate(-32 10 7)" fill="#f1e0c4" stroke="#e8b230" stroke-width="1.800"/></svg>
<svg style="left:1496px;top:51.5px;" width="28" height="28" viewBox="0 0 28 28"><path d="M2 15.500L16 1.500l8.500 3.500L8.500 20z" fill="#e8b230"/><path d="M5.500 15.500L16.500 4.500l4.500 2L10 17.500z" fill="#f4e3b8"/><path d="M9 12l3.500 1.500M12.500 8.500l3.500 1.500" stroke="#e8b230" stroke-width="1.300"/><path d="M8 17L12 26.5" stroke="#e8b230" stroke-width="1.6"/><path d="M8.6 24.1L12 26.5L12.6 22.3" fill="none" stroke="#e8b230" stroke-width="1.6" stroke-linejoin="miter"/><path d="M13.5 13L25 26.5" stroke="#e8b230" stroke-width="1.6"/><path d="M21.0 25.2L25 26.5L24.3 22.4" fill="none" stroke="#e8b230" stroke-width="1.6" stroke-linejoin="miter"/><path d="M18 8.5L27 13" stroke="#e8b230" stroke-width="1.6"/><path d="M22.8 13.4L27 13L24.8 9.4" fill="none" stroke="#e8b230" stroke-width="1.6" stroke-linejoin="miter"/></svg>
<svg style="left:1567.98px;top:49.98px;" width="26.040000000000003" height="26.040000000000003" viewBox="0 0 28 28"><circle cx="14" cy="12" r="11" fill="url(#gGlow)"/><path d="M12 1h4l2.500 13l-2 5h-5l-2 -5z" fill="#b23bb0"/><path d="M12.500 6c2 -1 3 1 2 2.500c2 0 2.500 3 0.500 4c1 1.500 -1.500 3 -2.500 1.500c-1.500 -0.500 -1.500 -2.500 0 -3c-1.500 -1 -1.500 -3.500 0 -5z" fill="#ffd21c"/><path d="M12 1h4l0.500 2.500h-5z" fill="#d9d9d9"/><path d="M11.500 19h5l2 5.500h-9z" fill="url(#gMet)"/><path d="M9.500 24.500h9v1.500h-9z" fill="#6a6a6a"/></svg>
<svg style="left:1647px;top:51px;" width="28" height="28" viewBox="0 0 28 28"><circle cx="14" cy="13" r="12" fill="url(#gGlow)" opacity="0.55"/><ellipse cx="14" cy="23.500" rx="11" ry="3" fill="url(#gGlow)"/><path d="M14 2c1 4 6.500 6 6.500 12.500a6.500 6.500 0 0 1 -13 0c0 -3 1.500 -4.500 2.500 -6c0.500 2 1 2.500 2 3c-0.500 -3.500 0 -7 2 -9.500z" fill="url(#gFire)"/><path d="M14 11c2 2.500 3 3.500 3 6a3 3 0 0 1 -6 0c0 -2 1.500 -3 3 -6z" fill="#fff6b8"/></svg>
<svg style="left:1721.5px;top:51.5px;" width="28" height="28" viewBox="0 0 28 28"><path d="M3 1L16 14" stroke="#e8b230" stroke-width="2.2"/><path d="M10.2 12.6L16 14L14.6 8.2" fill="none" stroke="#e8b230" stroke-width="2.2" stroke-linejoin="miter"/><path d="M12.5 1L25.5 14" stroke="#e8b230" stroke-width="2.2"/><path d="M19.7 12.6L25.5 14L24.1 8.2" fill="none" stroke="#e8b230" stroke-width="2.2" stroke-linejoin="miter"/><path d="M3 13.5L16 26.5" stroke="#e8b230" stroke-width="2.2"/><path d="M10.2 25.1L16 26.5L14.6 20.7" fill="none" stroke="#e8b230" stroke-width="2.2" stroke-linejoin="miter"/><path d="M12.5 13.5L25.5 26.5" stroke="#e8b230" stroke-width="2.2"/><path d="M19.7 25.1L25.5 26.5L24.1 20.7" fill="none" stroke="#e8b230" stroke-width="2.2" stroke-linejoin="miter"/></svg>
<svg style="left:1801.06px;top:50.56px;" width="26.88" height="26.88" viewBox="0 0 28 28"><path d="M1.500 19.500a12.500 16 0 0 1 25 0" fill="none" stroke="#e8b230" stroke-width="1.800"/><path d="M3.500 17a10.500 13.500 0 0 1 21 0" fill="none" stroke="#f3dca0" stroke-width="1"/><ellipse cx="14" cy="20" rx="12.500" ry="4.800" fill="#f4e3c8" stroke="#e8b230" stroke-width="1.800"/></svg>
<svg style="left:1869.5px;top:52px;" width="28" height="28" viewBox="0 0 28 28"><circle cx="8" cy="5" r="5.500" fill="#4a78b8" opacity="0.55"/><circle cx="8" cy="5" r="2.700" fill="#f8e040"/><ellipse cx="14" cy="20.500" rx="12.500" ry="5.500" fill="#a87818"/><ellipse cx="14" cy="18" rx="12.500" ry="6" fill="#e4c838"/><path d="M14 18L3 15M14 18l-6 5M14 18l4 5.500M14 18l11 1M14 18l8 -4" stroke="#f6e9a0" stroke-width="0.700"/><path d="M13.500 18.500L19 8.500l2.500 1z" fill="#8a5a2c"/><path d="M14 18l4 -5" stroke="#e8e8e8" stroke-width="1.200"/></svg>
<svg style="left:1923.5px;top:51px;" width="28" height="28" viewBox="0 0 28 28"><ellipse cx="14" cy="25.500" rx="8" ry="1.800" fill="#1c1c1c" opacity="0.5"/><circle cx="14" cy="13.500" r="12.300" fill="url(#gGI)"/><circle cx="6.500" cy="13" r="5" fill="#a8e0a0" opacity="0.300"/><circle cx="22" cy="13" r="5" fill="#f0a0a8" opacity="0.300"/></svg>
<svg style="left:1988px;top:51px;" width="28" height="28" viewBox="0 0 28 28"><ellipse cx="21" cy="21.500" rx="7.500" ry="5" fill="#3a6cb0" opacity="0.500"/><path d="M8.500 3h8l-1 11c3 1 7 3 9.500 6.500l-4 4.500c-3 -3.500 -9 -5 -11.500 -8z" fill="#a9c6e8" opacity="0.900"/><ellipse cx="12.500" cy="3.500" rx="4.200" ry="1.800" fill="#dceafa" stroke="#7fa5d8" stroke-width="0.700"/><path d="M9 5v9" stroke="#eaf2fc" stroke-width="1.200"/></svg>
<svg style="left:2058px;top:51.5px;" width="28" height="28" viewBox="0 0 28 28"><path d="M5 2l4 -0.500l17.500 21v4.500l-15 -3.500z" fill="#b9c23a"/><path d="M5 2l6.500 21.500l-4.500 -7z" fill="#8a8a2a"/><path d="M9 1.500l17.500 21l-12 -3z" fill="#e0d648"/><path d="M11.500 23.500l15 3.500v-4.500l-12 -3z" fill="#6fa868"/><path d="M5 2l9.500 17.500M7 4l14 17" stroke="#f0c030" stroke-width="0.800"/></svg>
<svg style="left:2133px;top:51px;" width="28" height="28" viewBox="0 0 28 28"><path d="M14 1.500a8.300 8.300 0 0 1 8.300 8.300c0 4.500 -3.800 6.500 -4.300 11h-8c-0.500 -4.500 -4.300 -6.500 -4.300 -11a8.300 8.300 0 0 1 8.300 -8.300z" fill="#cfe8ea"/><path d="M14 3a6.800 6.800 0 0 0 -6.500 7" fill="none" stroke="#ffffff" stroke-width="1.500" opacity="0.800"/><path d="M11.500 18l1.200 -2.500l1.300 2l1.300 -2l1.200 2.500" fill="none" stroke="#7a8a8c" stroke-width="0.800"/><path d="M10 20.800h8v4.500l-2 1.700h-4l-2 -1.700z" fill="#9a9a9a"/><path d="M10 22.500h8M10 24.200h8" stroke="#5a5a5a" stroke-width="0.800"/></svg>
<svg style="left:2216.06px;top:50.56px;" width="26.88" height="26.88" viewBox="0 0 28 28"><path d="M1 7.500l4 -3.500h18l4 3.500v12.500h-26z" fill="#2d5fa8"/><path d="M3 8h22v11.500h-22z" fill="#c9ced3"/><path d="M5 4h18l2 4h-22z" fill="#e8ebee"/><circle cx="8" cy="14" r="4.300" fill="#1c1c1c"/><circle cx="8" cy="14" r="2.200" fill="#5a6670"/><circle cx="20" cy="14" r="4.300" fill="#1c1c1c"/><circle cx="20" cy="14" r="2.200" fill="#5a6670"/><rect x="12.300" y="12" width="3.400" height="3.400" fill="#3a3a3a"/><rect x="13" y="12.700" width="2" height="2" fill="#58b848"/></svg>
<svg style="left:2289px;top:51px;" width="28" height="28" viewBox="0 0 28 28"><path d="M12 8c0 -5 3 -7 6 -7c4 0 8 4 9 10" fill="none" stroke="#4a5a66" stroke-width="2.500"/><path d="M14 9c2 -4 8 -3 12 3" fill="none" stroke="#3a6cb0" stroke-width="1.200"/><path d="M1 10.500c5 -2.500 12 -2 17 1l1 11.500c-5 1 -12 -1 -17 -4.500z" fill="#1e2328"/><path d="M18 11.500l7 -1.500l1 9l-7 4z" fill="#3c4852"/><path d="M1.500 14.500c5 0 11 1 16.500 3.500" fill="none" stroke="#4a86d0" stroke-width="1.200"/><circle cx="21" cy="15" r="0.700" fill="#e03030"/><circle cx="21" cy="17.500" r="0.700" fill="#40c040"/></svg>
<svg style="left:2349.5px;top:51px;" width="28" height="28" viewBox="0 0 28 28"><path d="M9 5l8 -3.500l1.500 2.500l-8 4z" fill="#d8d8d8"/><path d="M12.500 6l2 -1l4 10l-2.500 1z" fill="#b8b8b8"/><path d="M3 17c3 -4 9 -5 13 -2l6 7.500l-4 4.500c-4 -4 -10 -7 -15 -7z" fill="#dcdcdc"/><path d="M16 15l6 7.500l-4 4.500l2.500 -6z" fill="#8a8a8a"/><path d="M3 17c5 0 11 3 15 7l0 3c-4 -4 -10 -7 -15 -7z" fill="#a8a8a8"/></svg>
<svg style="left:2419.06px;top:50.06px;" width="26.88" height="26.88" viewBox="0 0 28 28"><path d="M6 3.500c3 -1 13 -1 16 0c3 2 5 12 5 18c0 3 -3 3.500 -4.500 1l-3.500 -5.500h-10l-3.500 5.500c-1.500 2.500 -4.500 2 -4.500 -1c0 -6 2 -16 5 -18z" fill="url(#gWh)"/><path d="M6.500 7v4M4.500 9h4" stroke="#555" stroke-width="1.600"/><circle cx="10.500" cy="14.500" r="2" fill="#444"/><circle cx="17.500" cy="14.500" r="2" fill="#444"/><circle cx="20" cy="7.500" r="1" fill="#e88a2c"/><circle cx="22.500" cy="9.500" r="1" fill="#e88a2c"/><circle cx="20" cy="11.500" r="1" fill="#e88a2c"/><circle cx="17.500" cy="9.500" r="1" fill="#e88a2c"/><rect x="12.500" y="6" width="3" height="2" fill="#bbb"/></svg>
<div style="left:18px;top:1380px;width:33px;height:34px;background:linear-gradient(#4b4b4b,#393939);border:1px solid #1b1b1b;box-shadow:1px 1px 0 #222;"></div>
<svg style="left:18px;top:1380px;" width="33" height="34" viewBox="0 0 33 34"><rect x="4.500" y="9.500" width="3" height="14" fill="url(#gWh)"/><path d="M18 9.500v14l-10 -7zM28 9.500v14l-10 -7z" fill="url(#gWh)"/></svg>
<div style="left:52px;top:1380px;width:33px;height:34px;background:linear-gradient(#4b4b4b,#393939);border:1px solid #1b1b1b;box-shadow:1px 1px 0 #222;"></div>
<svg style="left:52px;top:1380px;" width="33" height="34" viewBox="0 0 33 34"><path d="M23 9v15l-13 -7.500z" fill="url(#gWh)"/></svg>
<div style="left:86px;top:1380px;width:33px;height:34px;background:linear-gradient(#6483ad,#56749d);border:1px solid #1b1b1b;box-shadow:1px 1px 0 #222;"></div>
<svg style="left:86px;top:1380px;" width="33" height="34" viewBox="0 0 33 34"><rect x="9" y="8.500" width="16" height="16" fill="url(#gWh)" stroke="#8a8a8a" stroke-width="0.800"/></svg>
<div style="left:120px;top:1380px;width:33px;height:34px;background:linear-gradient(#4b4b4b,#393939);border:1px solid #1b1b1b;box-shadow:1px 1px 0 #222;"></div>
<svg style="left:120px;top:1380px;" width="33" height="34" viewBox="0 0 33 34"><path d="M11 9v15l13 -7.500z" fill="url(#gWh)"/></svg>
<div style="left:154px;top:1380px;width:33px;height:34px;background:linear-gradient(#4b4b4b,#393939);border:1px solid #1b1b1b;box-shadow:1px 1px 0 #222;"></div>
<svg style="left:154px;top:1380px;" width="33" height="34" viewBox="0 0 33 34"><path d="M5 9.500v14l10 -7zM15 9.500v14l10 -7z" fill="url(#gWh)"/><rect x="25.500" y="9.500" width="3" height="14" fill="url(#gWh)"/></svg>
<div style="left:192px;top:1380px;width:56px;height:34px;background:#141414;border:1px solid #0c0c0c;"></div>
<span class="t" style="top:1392.24px;font-size:13.5px;color:#e8e8e8;left:195.50px;font-family:'Liberation Mono',monospace;">1</span>
<div style="left:251px;top:1380px;width:16px;height:34px;background:linear-gradient(#4b4b4b,#393939);border:1px solid #1b1b1b;box-shadow:1px 1px 0 #222;"></div>
<svg style="left:251px;top:1380px;" width="16" height="34" viewBox="0 0 16 34"><path d="M9 12.500v9l-6 -4.500z" fill="url(#gWh)"/><rect x="10" y="12.500" width="2.600" height="9" fill="url(#gWh)"/></svg>
<div style="left:268px;top:1380px;width:16px;height:34px;background:linear-gradient(#4b4b4b,#393939);border:1px solid #1b1b1b;box-shadow:1px 1px 0 #222;"></div>
<svg style="left:268px;top:1380px;" width="16" height="34" viewBox="0 0 16 34"><rect x="3.500" y="12.500" width="2.600" height="9" fill="url(#gWh)"/><path d="M7.500 12.500v9l6 -4.500z" fill="url(#gWh)"/></svg>
<div style="left:18px;top:1424px;width:33px;height:29px;background:linear-gradient(#4b4b4b,#393939);border:1px solid #1b1b1b;box-shadow:1px 1px 0 #222;"></div>
<svg style="left:18px;top:1424px;" width="33" height="29" viewBox="0 0 33 29"><rect x="9.500" y="4" width="15" height="3" fill="#9a9a9a"/><rect x="9.500" y="8" width="15" height="15" fill="#f4f4f4" stroke="#777" stroke-width="0.600"/><path d="M17 13l10 9l-4.300 0.400l2.300 4.400l-2 1l-2.300 -4.500l-3.200 3z" fill="#111" stroke="#fff" stroke-width="0.900"/></svg>
<div style="left:52px;top:1424px;width:33px;height:29px;background:linear-gradient(#4b4b4b,#393939);border:1px solid #1b1b1b;box-shadow:1px 1px 0 #222;"></div>
<svg style="left:52px;top:1424px;" width="33" height="29" viewBox="0 0 33 29"><path d="M6 11h4l5 -4v15l-5 -4h-4z" fill="#2a2a2a" stroke="#888" stroke-width="0.800"/><ellipse cx="19" cy="14.500" rx="6.500" ry="11" fill="#3c4a50" stroke="#e0e0e0" stroke-width="1.200"/><ellipse cx="18" cy="14.500" rx="2" ry="3" fill="#d8d8d8"/></svg>
<div style="left:86px;top:1424px;width:33px;height:29px;background:linear-gradient(#4b4b4b,#393939);border:1px solid #1b1b1b;box-shadow:1px 1px 0 #222;"></div>
<svg style="left:86px;top:1424px;" width="33" height="29" viewBox="0 0 33 29"><path d="M7 20.500h20c0.500 -7 -4 -11.500 -11 -11.500v-4l-8 6l8 6v-4c4 0 6.500 2 7 4.500h-16z" fill="#f4f4f4" stroke="#111" stroke-width="1"/><path d="M24 24h8l-4 4.500z" fill="#7c7c7c"/></svg>
<div style="left:120px;top:1424px;width:33px;height:29px;background:linear-gradient(#4b4b4b,#393939);border:1px solid #1b1b1b;box-shadow:1px 1px 0 #222;"></div>
<svg style="left:120px;top:1424px;" width="33" height="29" viewBox="0 0 33 29"><circle cx="16.500" cy="14.500" r="10" fill="#2d2d2d" stroke="#f0f0f0" stroke-width="1.500"/><circle cx="16.500" cy="14.500" r="6.500" fill="none" stroke="#f0f0f0" stroke-width="1.700"/><path d="M16.500 10.500v8M12.500 14.500h8" stroke="#f0f0f0" stroke-width="1.700"/></svg>
<div style="left:154px;top:1424px;width:33px;height:29px;background:linear-gradient(#4b4b4b,#393939);border:1px solid #1b1b1b;box-shadow:1px 1px 0 #222;"></div>
<svg style="left:154px;top:1424px;" width="33" height="29" viewBox="0 0 33 29"><path d="M6 9v9M10.500 9v4M15 9v6M19.500 9v4M24.500 9v13" stroke="#cfcfcf" stroke-width="2.200"/><path d="M27.500 19v7l4.500 -3.500z" fill="#9a9a9a"/></svg>
<div style="left:188px;top:1424px;width:33px;height:29px;background:linear-gradient(#4b4b4b,#393939);border:1px solid #1b1b1b;box-shadow:1px 1px 0 #222;"></div>
<svg style="left:188px;top:1424px;" width="33" height="29" viewBox="0 0 33 29"><path d="M8 17h18" stroke="#d8d8d8" stroke-width="1.800"/><circle cx="19" cy="17" r="3" fill="#e8e8e8"/><path d="M11.500 6.500v5l-4 -2.500zM22.500 6.500v5l4 -2.500z" fill="none" stroke="#7a7a7a" stroke-width="0.800"/></svg>
<div style="left:226px;top:1424px;width:28px;height:29px;background:linear-gradient(#4b4b4b,#393939);border:1px solid #1b1b1b;box-shadow:1px 1px 0 #222;"></div>
<svg style="left:226px;top:1424px;" width="28" height="29" viewBox="0 0 28 29"><rect x="8.500" y="8.500" width="2.500" height="11" fill="#3c5a30" stroke="#567a44" stroke-width="0.600"/><path d="M21 9v10.500l-8 -5.200z" fill="#5f5f5f"/></svg>
<div style="left:255px;top:1424px;width:28px;height:29px;background:linear-gradient(#4b4b4b,#393939);border:1px solid #1b1b1b;box-shadow:1px 1px 0 #222;"></div>
<svg style="left:255px;top:1424px;" width="28" height="29" viewBox="0 0 28 29"><path d="M7 9v10.500l8 -5.200z" fill="#5f5f5f"/><rect x="17" y="8.500" width="2.500" height="11" fill="#3c5a30" stroke="#567a44" stroke-width="0.600"/></svg>
<div style="left:291px;top:1425px;width:52px;height:26px;background:#222;border:1px solid #2b2b2b;"></div>
<div style="left:346px;top:1425px;width:52px;height:26px;background:#141414;border:1px solid #2a2a2a;"></div>
<span class="t" style="top:1432.74px;font-size:13.5px;color:#e8e8e8;left:295.00px;font-family:'Liberation Mono',monospace;">1</span>
<span class="t" style="top:1432.74px;font-size:13.5px;color:#e8e8e8;left:350.50px;font-family:'Liberation Mono',monospace;">1</span>
<div style="left:404px;top:1437px;width:1732px;height:4px;background:#757575;"></div>
<svg style="left:399.5px;top:1432.5px;" width="7" height="13" viewBox="0 0 7 13"><path d="M0 0v13l7 -6.500z" fill="#8c8c8c"/></svg>
<svg style="left:2134.5px;top:1432.5px;" width="7" height="13" viewBox="0 0 7 13"><path d="M7 0v13l-7 -6.500z" fill="#8c8c8c"/></svg>
<div style="left:2143px;top:1425px;width:52px;height:26px;background:#141414;border:1px solid #2a2a2a;"></div>
<div style="left:2198px;top:1425px;width:52px;height:26px;background:#1f1f1f;border:1px solid #2b2b2b;"></div>
<span class="t" style="top:1432.74px;font-size:13.5px;color:#e8e8e8;left:2146.50px;letter-spacing:0.244px;font-family:'Liberation Mono',monospace;">240</span>
<span class="t" style="top:1432.74px;font-size:13.5px;color:#e8e8e8;left:2201.80px;letter-spacing:0.244px;font-family:'Liberation Mono',monospace;">240</span>
<svg style="left:0;top:0" width="2559" height="1485" viewBox="0 0 2559 1485"><path d="M290 1398.500H2246" stroke="#c4c4c4" stroke-width="1.200"/><path d="M290.40 1393V1404M298.57 1393V1404M306.73 1393V1404M314.90 1393V1404M323.07 1393V1404M331.24 1393V1404M339.40 1393V1404M347.57 1393V1404M355.74 1393V1404M363.91 1393V1404M372.07 1393V1404M380.24 1393V1404M388.41 1393V1404M396.58 1393V1404M404.74 1393V1404M412.91 1393V1404M421.08 1393V1404M429.25 1393V1404M437.41 1393V1404M445.58 1393V1404M453.75 1393V1404M461.91 1393V1404M470.08 1393V1404M486.42 1393V1404M494.58 1393V1404M502.75 1393V1404M510.92 1393V1404M519.09 1393V1404M527.25 1393V1404M535.42 1393V1404M543.59 1393V1404M551.76 1393V1404M559.92 1393V1404M568.09 1393V1404M576.26 1393V1404M584.43 1393V1404M592.59 1393V1404M600.76 1393V1404M608.93 1393V1404M617.09 1393V1404M625.26 1393V1404M633.43 1393V1404M641.60 1393V1404M649.76 1393V1404M657.93 1393V1404M666.10 1393V1404M682.43 1393V1404M690.60 1393V1404M698.77 1393V1404M706.94 1393V1404M715.10 1393V1404M723.27 1393V1404M731.44 1393V1404M739.61 1393V1404M747.77 1393V1404M755.94 1393V1404M764.11 1393V1404M772.27 1393V1404M780.44 1393V1404M788.61 1393V1404M796.78 1393V1404M804.94 1393V1404M813.11 1393V1404M821.28 1393V1404M829.45 1393V1404M837.61 1393V1404M845.78 1393V1404M853.95 1393V1404M862.12 1393V1404M878.45 1393V1404M886.62 1393V1404M894.78 1393V1404M902.95 1393V1404M911.12 1393V1404M919.29 1393V1404M927.45 1393V1404M935.62 1393V1404M943.79 1393V1404M951.96 1393V1404M960.12 1393V1404M968.29 1393V1404M976.46 1393V1404M984.63 1393V1404M992.79 1393V1404M1000.96 1393V1404M1009.13 1393V1404M1017.30 1393V1404M1025.46 1393V1404M1033.63 1393V1404M1041.80 1393V1404M1049.96 1393V1404M1058.13 1393V1404M1074.47 1393V1404M1082.63 1393V1404M1090.80 1393V1404M1098.97 1393V1404M1107.14 1393V1404M1115.30 1393V1404M1123.47 1393V1404M1131.64 1393V1404M1139.81 1393V1404M1147.97 1393V1404M1156.14 1393V1404M1164.31 1393V1404M1172.48 1393V1404M1180.64 1393V1404M1188.81 1393V1404M1196.98 1393V1404M1205.14 1393V1404M1213.31 1393V1404M1221.48 1393V1404M1229.65 1393V1404M1237.81 1393V1404M1245.98 1393V1404M1254.15 1393V1404M1270.48 1393V1404M1278.65 1393V1404M1286.82 1393V1404M1294.99 1393V1404M1303.15 1393V1404M1311.32 1393V1404M1319.49 1393V1404M1327.66 1393V1404M1335.82 1393V1404M1343.99 1393V1404M1352.16 1393V1404M1360.32 1393V1404M1368.49 1393V1404M1376.66 1393V1404M1384.83 1393V1404M1392.99 1393V1404M1401.16 1393V1404M1409.33 1393V1404M1417.50 1393V1404M1425.66 1393V1404M1433.83 1393V1404M1442.00 1393V1404M1450.17 1393V1404M1466.50 1393V1404M1474.67 1393V1404M1482.84 1393V1404M1491.00 1393V1404M1499.17 1393V1404M1507.34 1393V1404M1515.50 1393V1404M1523.67 1393V1404M1531.84 1393V1404M1540.01 1393V1404M1548.17 1393V1404M1556.34 1393V1404M1564.51 1393V1404M1572.68 1393V1404M1580.84 1393V1404M1589.01 1393V1404M1597.18 1393V1404M1605.35 1393V1404M1613.51 1393V1404M1621.68 1393V1404M1629.85 1393V1404M1638.02 1393V1404M1646.18 1393V1404M1662.52 1393V1404M1670.68 1393V1404M1678.85 1393V1404M1687.02 1393V1404M1695.19 1393V1404M1703.35 1393V1404M1711.52 1393V1404M1719.69 1393V1404M1727.86 1393V1404M1736.02 1393V1404M1744.19 1393V1404M1752.36 1393V1404M1760.53 1393V1404M1768.69 1393V1404M1776.86 1393V1404M1785.03 1393V1404M1793.19 1393V1404M1801.36 1393V1404M1809.53 1393V1404M1817.70 1393V1404M1825.86 1393V1404M1834.03 1393V1404M1842.20 1393V1404M1858.53 1393V1404M1866.70 1393V1404M1874.87 1393V1404M1883.04 1393V1404M1891.20 1393V1404M1899.37 1393V1404M1907.54 1393V1404M1915.71 1393V1404M1923.87 1393V1404M1932.04 1393V1404M1940.21 1393V1404M1948.37 1393V1404M1956.54 1393V1404M1964.71 1393V1404M1972.88 1393V1404M1981.04 1393V1404M1989.21 1393V1404M1997.38 1393V1404M2005.55 1393V1404M2013.71 1393V1404M2021.88 1393V1404M2030.05 1393V1404M2038.22 1393V1404M2054.55 1393V1404M2062.72 1393V1404M2070.89 1393V1404M2079.05 1393V1404M2087.22 1393V1404M2095.39 1393V1404M2103.55 1393V1404M2111.72 1393V1404M2119.89 1393V1404M2128.06 1393V1404M2136.22 1393V1404M2144.39 1393V1404M2152.56 1393V1404M2160.73 1393V1404M2168.89 1393V1404M2177.06 1393V1404M2185.23 1393V1404M2193.40 1393V1404M2201.56 1393V1404M2209.73 1393V1404M2217.90 1393V1404M2226.07 1393V1404M2234.23 1393V1404" stroke="#b4b4b4" stroke-width="1"/><path d="M478.25 1390V1408M674.27 1390V1408M870.28 1390V1408M1066.30 1390V1408M1262.32 1390V1408M1458.33 1390V1408M1654.35 1390V1408M1850.37 1390V1408M2046.38 1390V1408M2242.40 1390V1408" stroke="#d0d0d0" stroke-width="1.300"/><path d="M290.500 1398.500V1373.800H320.800V1392.600H296.500z" fill="#050505" stroke="#f4f4f4" stroke-width="1.100"/></svg>
<span class="t" style="top:1374.06px;font-size:11.8px;color:#8c8c8c;left:477.75px;">24</span>
<span class="t" style="top:1374.06px;font-size:11.8px;color:#8c8c8c;left:673.77px;">48</span>
<span class="t" style="top:1374.06px;font-size:11.8px;color:#8c8c8c;left:869.78px;">72</span>
<span class="t" style="top:1374.06px;font-size:11.8px;color:#8c8c8c;left:1065.80px;">96</span>
<span class="t" style="top:1374.06px;font-size:11.8px;color:#8c8c8c;left:1261.82px;">120</span>
<span class="t" style="top:1374.06px;font-size:11.8px;color:#8c8c8c;left:1457.83px;">144</span>
<span class="t" style="top:1374.06px;font-size:11.8px;color:#8c8c8c;left:1653.85px;">168</span>
<span class="t" style="top:1374.06px;font-size:11.8px;color:#8c8c8c;left:1849.87px;">192</span>
<span class="t" style="top:1374.06px;font-size:11.8px;color:#8c8c8c;left:2045.88px;">216</span>
<span class="t" style="top:1374.06px;font-size:11.8px;color:#8c8c8c;left:2243.00px;">2</span>
<span class="t" style="top:1377.43px;font-size:14.4px;color:#ffffff;left:305.00px;transform:translateX(-50%);">1</span>
<div style="left:2300px;top:1400px;width:22px;height:25px;background:linear-gradient(#444,#363636);border:1px solid #222;box-shadow:1px 1px 0 #1c1c1c;"></div>
<svg style="left:2305px;top:1408.5px;" width="10" height="8" viewBox="0 0 10 8"><path d="M0 0h9l-4.500 6.500z" fill="#8a8a8a"/></svg>
<div style="left:2253px;top:1388px;width:50px;height:50px;background:#333;border-radius:50%;border:1px solid #262626;"></div>
<svg style="left:2262px;top:1397px;" width="32" height="32" viewBox="0 0 32 32"><g transform="rotate(40 16 16)" fill="none" stroke="#5e5e5e"><circle cx="16" cy="8" r="4.500" stroke-width="2.400"/><path d="M16 12.500v14M16 21h4M16 25.500h3.500" stroke-width="2.400"/></g></svg>
<div style="left:2329px;top:1381px;width:28.5px;height:28.5px;background:linear-gradient(#4b4b4b,#393939);border:1px solid #1b1b1b;box-shadow:1px 1px 0 #222;"></div>
<svg style="left:2329px;top:1381px;" width="28.5" height="28.5" viewBox="0 0 28.5 28.5"><rect x="5" y="4" width="17" height="20" fill="#9a9a9a"/><rect x="5" y="9.500" width="3" height="3" fill="#e02020"/><rect x="5" y="13.200" width="3" height="3" fill="#30b030"/><rect x="5" y="16.900" width="3" height="3" fill="#3070e0"/><rect x="5" y="20.600" width="3" height="3" fill="#e02020"/><path d="M11 12a6.500 6.500 0 0 1 11.500 -2l2 -2v6h-6l2 -2a4 4 0 0 0 -6.500 1zM24 17a6.500 6.500 0 0 1 -11.500 2l-2 2v-6h6l-2 2a4 4 0 0 0 6.500 -1z" fill="#fff" stroke="#111" stroke-width="0.900"/><path d="M22.500 21v6.500l4.500 -3.200z" fill="#9a9a9a"/></svg>
<div style="left:2329px;top:1415.5px;width:28.5px;height:28.5px;background:linear-gradient(#4b4b4b,#393939);border:1px solid #1b1b1b;box-shadow:1px 1px 0 #222;"></div>
<svg style="left:2329px;top:1415.5px;" width="28.5" height="28.5" viewBox="0 0 28.5 28.5"><rect x="4.500" y="4.500" width="19.500" height="19" fill="#050505"/><path d="M4.500 14h19.500" stroke="#c8c8c8" stroke-width="0.800"/><path d="M5 15c3 -6 5 -6 8.500 0s6 3 10 0" fill="none" stroke="#e8962c" stroke-width="1.100"/><path d="M5 13c2.500 11 5 11 8 0s6 -11 9 2" fill="none" stroke="#5a9ae0" stroke-width="1.100"/></svg>
<div style="left:2364px;top:1381.5px;width:190.5px;height:28px;background:linear-gradient(#4c4c4c,#3b3b3b);border:1px solid #1c1c1c;box-shadow:1px 1px 0 #202020;"></div>
<span class="t" style="top:1390.16px;font-size:12.8px;color:#cccccc;left:2385.30px;letter-spacing:0.296px;">0 keys, 0/0 channels</span>
<svg style="left:2537.5px;top:1391px;" width="9" height="8" viewBox="0 0 9 8"><path d="M0 7.500h9l-4.500 -7.500z" fill="#8a8a8a"/></svg>
<div style="left:2362px;top:1417px;width:191px;height:26px;background:linear-gradient(#4c4c4c,#3b3b3b);border:1px solid #1c1c1c;box-shadow:1px 1px 0 #202020;"></div>
<div style="left:2531px;top:1418px;width:21px;height:24px;background:linear-gradient(#3c3c3c,#2e2e2e);"></div>
<svg style="left:2537.5px;top:1421px;" width="9" height="18" viewBox="0 0 9 18"><path d="M0 7h9l-4.500 -7zM0 11h9l-4.500 7z" fill="#8a8a8a"/></svg>
<span class="t" style="top:1424.96px;font-size:12.8px;color:#cccccc;left:2379.60px;letter-spacing:0.243px;">Key All Channels</span>
<div style="left:2326px;top:1458px;width:96px;height:27px;background:#3a3a3a;"></div>
<div style="left:2422px;top:1458px;width:137px;height:27px;background:linear-gradient(#4a4a4a,#3c3c3c);border-left:1px solid #2a2a2a;"></div>
<div style="left:2535px;top:1458px;width:24px;height:27px;background:linear-gradient(#3a3a3a,#2e2e2e);"></div>
<svg style="left:2542.5px;top:1464px;" width="9" height="20" viewBox="0 0 9 20"><path d="M0 7h9l-4.500 -7zM0 11.500h9l-4.500 7z" fill="#8a8a8a"/></svg>
<span class="t" style="top:1466.96px;font-size:12.8px;color:#cccccc;left:2441.40px;letter-spacing:0.554px;">Auto Update</span>
<svg style="left:2329px;top:1461px;" width="24" height="24" viewBox="0 0 24 24"><rect x="9.500" y="9" width="5" height="5" fill="#e8962c"/><path d="M7 5.500a8 8 0 0 0 0 12M17 5.500a8 8 0 0 1 0 12" fill="none" stroke="#9a9a9a" stroke-width="1.200"/><path d="M4 3a12 12 0 0 0 0 17M20 3a12 12 0 0 1 0 17" fill="none" stroke="#7a7a7a" stroke-width="1.200"/><path d="M19 19v5.500l4 -2.700z" fill="#8a8a8a"/></svg>
<svg style="left:2358px;top:1461px;" width="28" height="24" viewBox="0 0 28 24"><path d="M3.500 13c-2 -5 3 -10 9 -9.500c5 -1.500 11 2 11 8c0 4 -3 6.500 -6 6.500l-1.500 3l-2.500 -3c-4 0.500 -8 -1 -10 -5z" fill="#e0e0e0"/><path d="M8 6c3 2 2 5 0 6M13 4.500c2 3 1 6 -1 8M17 6c1 3 0 6 -2 7M20 9c0 2 -1 4 -3 5M5 11c2 1 4 1 6 0" fill="none" stroke="#8a8a8a" stroke-width="0.800"/><path d="M24 19v5.500l4 -2.700z" fill="#8a8a8a"/></svg>
<svg style="left:2390px;top:1461px;" width="28" height="24" viewBox="0 0 28 24"><path d="M4 11a9 8 0 0 1 16 -4l3 -3v9h-9l3 -3a5.500 5 0 0 0 -9 1zM24 14a9 8 0 0 1 -16 4l-3 3v-9h9l-3 3a5.500 5 0 0 0 9 -1z" fill="#555"/></svg>
<svg style="left:24.5px;top:51.0px;" width="28.0" height="28.0" viewBox="0 0 28 28"><path d="M3 6.5L17 2.5L26 6.5L26 19L12.5 26L3 19z" fill="#aebbc4"/><path d="M3 6.5L17 2.5L26 6.5L12.5 11z" fill="#e3e9ed"/><path d="M12.5 11L26 6.5L26 19L12.5 26z" fill="#9aa8b2"/><path d="M3 6.5L12.5 11L12.5 26L3 19z" fill="#c6d0d7"/></svg>
<svg style="left:75.0px;top:51.0px;" width="28.0" height="28.0" viewBox="0 0 28 28"><ellipse cx="14" cy="25" rx="9" ry="2" fill="#222" opacity="0.5"/><circle cx="14" cy="14" r="12" fill="url(#gSph)"/></svg>
<svg style="left:126.0px;top:51.0px;" width="28.0" height="28.0" viewBox="0 0 28 28"><ellipse cx="15" cy="25" rx="8" ry="2" fill="#222" opacity="0.5"/><path d="M6.5 5v17a7.5 3 0 0 0 15 0v-17z" fill="url(#gCyl)" stroke="#7fb4c4" stroke-width="0.6"/><ellipse cx="14" cy="5" rx="7.5" ry="3" fill="#8f9da7" stroke="#cfe3ea" stroke-width="0.8"/></svg>
<svg style="left:177.0px;top:51.0px;" width="28.0" height="28.0" viewBox="0 0 28 28"><ellipse cx="14" cy="15.5" rx="11.8" ry="8" fill="#6f7e8a"/><ellipse cx="14" cy="14.5" rx="11.5" ry="7" fill="#95a4b0"/><ellipse cx="14" cy="12.5" rx="6" ry="2.5" fill="#27323a"/><ellipse cx="14" cy="13.2" rx="5.5" ry="1.8" fill="#55636e"/><ellipse cx="14" cy="12.2" rx="5" ry="1.6" fill="#1f282f"/></svg>
<svg style="left:228.0px;top:51.0px;" width="28.0" height="28.0" viewBox="0 0 28 28"><path d="M7.5 13.500h13.500l4.500 8h-23z" fill="#d5dde2"/><path d="M2.500 21.500h23v1.300h-23z" fill="#8d99a3"/></svg>
<svg style="left:279.0px;top:51.0px;" width="28.0" height="28.0" viewBox="0 0 28 28"><path d="M5 9.500L23.500 20.500" stroke="#e02020" stroke-width="1.600"/><circle cx="5" cy="9.500" r="2" fill="#e02020"/><circle cx="23.500" cy="20.500" r="2" fill="#e02020"/><path d="M3.500 20.500L22.500 9.500" stroke="#4a83d0" stroke-width="1.200"/><circle cx="3.500" cy="20.500" r="1.600" fill="#4a83d0"/><circle cx="22.500" cy="9.500" r="1.600" fill="#4a83d0"/><path d="M14 4v21" stroke="#b9bf2a" stroke-width="2" stroke-linecap="round"/><circle cx="14" cy="4" r="1.500" fill="#c8cc28"/><circle cx="14" cy="25" r="1.500" fill="#c8cc28"/><circle cx="14" cy="15" r="1.100" fill="#fff8c0"/></svg>
<svg style="left:331.0px;top:51.0px;" width="28.0" height="28.0" viewBox="0 0 28 28"><path d="M4 1v24M1 23h24" stroke="#6a6a6a" stroke-width="1"/><path d="M4 23L21 4" stroke="#f2f2f2" stroke-width="3.4"/><path d="M4 23L21 4" stroke="#0a0a0a" stroke-width="2"/><path d="M2.5 20.5L19 2.5" stroke="#e02020" stroke-width="1" stroke-dasharray="1.2 1.2"/><path d="M15 11a16 16 0 0 1 5 12" fill="none" stroke="#e02020" stroke-width="1" stroke-dasharray="1.2 1.4"/><path d="M17 2l3 0.5l-1 2.5z" fill="#e02020"/></svg>
<svg style="left:381.5px;top:51.0px;" width="28.0" height="28.0" viewBox="0 0 28 28"><circle cx="14" cy="14" r="12" fill="none" stroke="#6c87b4" stroke-width="1.3"/></svg>
<svg style="left:444.0px;top:51.0px;" width="28.0" height="28.0" viewBox="0 0 28 28"><path d="M2 17C5 6 9 4 14 4.5C20 5 24 10 26 17" fill="none" stroke="#4d86cf" stroke-width="1.3"/><path d="M2 4.5h24" stroke="#e02020" stroke-width="0.9"/><circle cx="26" cy="4.5" r="1.3" fill="#e02020"/><circle cx="14" cy="4.5" r="1.5" fill="#4d86cf"/><circle cx="2" cy="17" r="1.5" fill="#4d86cf"/><circle cx="26" cy="17" r="1.5" fill="#4d86cf"/><path d="M4 5l9 13l5 -4z" fill="#e4e4e4" stroke="#555" stroke-width="0.6"/><path d="M4 5l10 10" stroke="#333" stroke-width="0.8"/><path d="M12.5 18.5l6.5 -5l5 6.5a4 4 0 0 1 -6.5 5z" fill="#2b5fa9"/><path d="M17 23.5l5.5 -4.5" stroke="#cfe0f6" stroke-width="1"/></svg>
<svg style="left:514.0px;top:51.0px;" width="28.0" height="28.0" viewBox="0 0 28 28"><path d="M6 4C10 9 9 12 6 16C3 20 5 24 13 26" fill="none" stroke="#050505" stroke-width="2"/><path d="M13.5 26l1 -5L24 3.5a1.8 1.8 0 0 1 3.2 1.6L18 22.5z" fill="url(#gPen)"/><path d="M13.5 26l1 -5l3.5 1.5z" fill="#d9d9d9"/><path d="M25 6.5l1.8 1L23 15" fill="none" stroke="#2f5fa8" stroke-width="0.9"/></svg>
<svg style="left:573.5px;top:51.0px;" width="28.0" height="28.0" viewBox="0 0 28 28"><path d="M4 3C10 2 15 5 15 9C15 13 4 15 4 19C4 23 9 25 13 26" fill="none" stroke="#8a8a8a" stroke-width="1"/><circle cx="4" cy="3" r="2" fill="#e6c21c"/><circle cx="15.5" cy="9" r="2" fill="#e6c21c"/><circle cx="4" cy="19.5" r="2" fill="#e6c21c"/><path d="M13.5 26l1 -5L24 5.5a1.8 1.8 0 0 1 3.2 1.6L18 22.5z" fill="url(#gPen)"/><path d="M13.5 26l1 -5l3.5 1.5z" fill="#d9d9d9"/></svg>
<svg style="left:633.5px;top:51.0px;" width="28.0" height="28.0" viewBox="0 0 28 28"><path d="M17.500 4l9.500 -2.500l1 8.500z" fill="#e02020" opacity="0.7"/><path d="M3.500 19L12 4.500l7.500 4L11.500 24a4.500 3 30 0 1 -8 -5z" fill="url(#gMet)"/><path d="M12 4.500l2.200 -2.500l4 2l-1 3z" fill="#cfcfcf"/><rect x="16" y="0.500" width="3.400" height="2.600" fill="#1c1c1c" transform="rotate(28 17.500 2)"/><path d="M14.500 10a5.200 5.200 0 1 0 2.500 7.500" fill="none" stroke="#d11d2a" stroke-width="2"/></svg>
<svg style="left:692.5px;top:51.0px;" width="28.0" height="28.0" viewBox="0 0 28 28"><path d="M3 2h22l1 6.500h-2.500c-0.500 -2.500 -1.500 -3.500 -6 -3.500v17c0 1.500 1 2 3.500 2v2h-13v-2c2.500 0 3.500 -0.500 3.500 -2v-17c-4.500 0 -5.500 1 -6 3.500h-2.500z" fill="#c3ccd3"/><path d="M11.500 5h3v17h-3z" fill="#e6ecf0"/><path d="M3 2h22l0.300 2h-22.600z" fill="#eef2f5"/></svg>
<svg style="left:829.5px;top:51.0px;" width="28.0" height="28.0" viewBox="0 0 28 28"><path d="M13 27C13.500 21 14 17 14 13M14 17L7 9M14 14L21 6M10.500 13L4 12M9 11L9.500 4M7 9L2.500 5M17.500 10L18 3M19 8.500L25.500 8M14 13L13.500 2M13.700 7L10.500 3.500M13.700 6L16 2.500M14 19L22 15M19 16.500L25.500 18M19 16.500L23 11.500M13.500 21L7 18M9 19L3.500 20.500M9 19L6.500 15" fill="none" stroke="#3f7cd0" stroke-width="1.4" stroke-linecap="round"/></svg>
<svg style="left:885.5px;top:51.0px;" width="28.0" height="28.0" viewBox="0 0 28 28"><ellipse cx="16" cy="25" rx="9" ry="1.800" fill="#222" opacity="0.4"/><path d="M9 13l5 -5l10 9l-6 5z" fill="#7fa7da"/><circle cx="8.500" cy="8.500" r="7" fill="url(#gBlu)"/><circle cx="20" cy="16.500" r="7.500" fill="url(#gBlu)"/></svg>
<svg style="left:938.0px;top:51.0px;" width="28.0" height="28.0" viewBox="0 0 28 28"><path d="M3 5.500l9 -1.500l2 2.500l8 -1v5h-19z" fill="#f1c27a"/><path d="M3 6v19l3 -15h17l0 -2.500" fill="#e9a24c"/><path d="M6.500 10h19l-4 13.500l-18.500 2z" fill="#f0f0f0"/><path d="M6.500 10h19l-1 3.500h-19z" fill="#ffffff"/><path d="M12 8c5 -4 9 -3 11 1l3.500 -2l-1.500 9.500l-8.500 -4l3.500 -1.800c-1.500 -2.500 -4 -3 -8 -1.700z" fill="#e8641b"/></svg>
<svg style="left:988.5px;top:51.0px;" width="28.0" height="28.0" viewBox="0 0 28 28"><path d="M14.5 14.3L14.5 14.4L14.5 14.5L14.5 14.5L14.5 14.6L14.4 14.7L14.4 14.8L14.3 14.9L14.2 15.0L14.1 15.0L14.0 15.1L13.8 15.1L13.7 15.1L13.6 15.1L13.4 15.1L13.3 15.1L13.1 15.1L13.0 15.0L12.9 14.9L12.7 14.8L12.6 14.7L12.5 14.5L12.4 14.4L12.3 14.2L12.3 14.0L12.2 13.8L12.2 13.6L12.2 13.4L12.3 13.2L12.3 13.0L12.4 12.8L12.5 12.6L12.6 12.4L12.8 12.2L13.0 12.0L13.2 11.9L13.4 11.8L13.7 11.7L13.9 11.6L14.2 11.6L14.5 11.5L14.7 11.6L15.0 11.6L15.3 11.7L15.6 11.8L15.8 12.0L16.1 12.2L16.3 12.4L16.5 12.6L16.7 12.9L16.9 13.2L17.0 13.5L17.1 13.8L17.1 14.1L17.1 14.5L17.1 14.8L17.0 15.2L16.9 15.5L16.8 15.9L16.6 16.2L16.4 16.5L16.1 16.8L15.8 17.0L15.5 17.3L15.1 17.5L14.8 17.6L14.4 17.7L14.0 17.8L13.5 17.8L13.1 17.8L12.7 17.7L12.3 17.6L11.9 17.4L11.5 17.2L11.1 16.9L10.8 16.6L10.5 16.3L10.2 15.9L10.0 15.5L9.8 15.0L9.6 14.6L9.6 14.1L9.5 13.6L9.5 13.1L9.6 12.6L9.8 12.1L10.0 11.6L10.2 11.2L10.5 10.7L10.9 10.3L11.2 10.0L11.7 9.7L12.2 9.4L12.7 9.2L13.2 9.0L13.7 8.9L14.3 8.8L14.9 8.9L15.5 8.9L16.0 9.1L16.6 9.3L17.1 9.6L17.6 9.9L18.1 10.3L18.5 10.7L18.8 11.2L19.2 11.7L19.4 12.3L19.6 12.9L19.8 13.5L19.8 14.2L19.8 14.8L19.7 15.5L19.6 16.1L19.4 16.7L19.1 17.3L18.7 17.9L18.3 18.4L17.8 18.9L17.3 19.3L16.7 19.7L16.1 20.0L15.4 20.2L14.7 20.4L14.0 20.5L13.3 20.5L12.6 20.4L11.9 20.3L11.2 20.1L10.5 19.7L9.9 19.4L9.3 18.9L8.7 18.4L8.2 17.8L7.8 17.2L7.4 16.5L7.2 15.8L7.0 15.0L6.8 14.2L6.8 13.5L6.9 12.7L7.0 11.9L7.3 11.1L7.6 10.4L8.0 9.6L8.4 9.0L9.0 8.4L9.6 7.8L10.3 7.3L11.0 6.9L11.8 6.6L12.6 6.3L13.5 6.2L14.3 6.1L15.2 6.2L16.1 6.3L16.9 6.5L17.8 6.9L18.5 7.3L19.3 7.8L20.0 8.4L20.6 9.0L21.1 9.8L21.6 10.5L22.0 11.4L22.3 12.3L22.4 13.2L22.5 14.1L22.5 15.1L22.4 16.0L22.2 16.9L21.8 17.8L21.4 18.7L20.9 19.5L20.3 20.3L19.6 20.9L18.8 21.6L18.0 22.1L17.1 22.5L16.1 22.8L15.2 23.1L14.2 23.2L13.2 23.2L12.1 23.1L11.1 22.9L10.2 22.6L9.2 22.1L8.3 21.6L7.5 21.0L6.7 20.2L6.1 19.4L5.5 18.5L5.0 17.6L4.6 16.6L4.3 15.6L4.1 14.5L4.1 13.4L4.2 12.3L4.4 11.2L4.7 10.2L5.1 9.2L5.7 8.2L6.3 7.3L7.1 6.4L7.9 5.7L8.9 5.0L9.9 4.5L10.9 4.0L12.0 3.7L13.1 3.5L14.3 3.4L15.5 3.5L16.6 3.7L17.8 4.0L18.9 4.4L19.9 4.9L20.9 5.6L21.8 6.4L22.6 7.3L23.4 8.2L24.0 9.3L24.5 10.4L24.9 11.5L25.1 12.7L25.2 14.0L25.2 15.2L25.1 16.4L24.8 17.7L24.4 18.8L23.8 20.0L23.1 21.0L22.3 22.0L21.4 22.9L20.4 23.7L19.3 24.4L18.2 25.0L17.0 25.4L15.7 25.7L14.4 25.9L13.1 25.9L11.8 25.8" fill="none" stroke="#e58a2c" stroke-width="1.5" stroke-linecap="round"/></svg>
<svg style="left:1039.0px;top:51.0px;" width="28.0" height="28.0" viewBox="0 0 28 28"><g fill="none" stroke="#e58a2c" stroke-width="1.100"><ellipse cx="13" cy="3.500" rx="2.500" ry="1.200"/><ellipse cx="13" cy="6.500" rx="4.500" ry="1.800"/><ellipse cx="13" cy="10" rx="6.500" ry="2.400"/><ellipse cx="13" cy="14" rx="9" ry="3"/><ellipse cx="13" cy="18.500" rx="11.500" ry="3.800"/><path d="M24.500 19c2 3 0 7 -5 8" stroke-width="1.400"/></g></svg>
<svg style="left:1104.5px;top:51.0px;" width="28.0" height="28.0" viewBox="0 0 28 28"><path d="M2 21l12 -5l13 6l-12 5z" fill="#6cc02a"/><path d="M7 10l7 -3l7 3v9l-7 4l-7 -4z" fill="#c9cdd0"/><path d="M7 10l7 3l7 -3l-7 -3z" fill="#eceff1"/><path d="M14 13v10l7 -4v-9z" fill="#a5abb0"/><path d="M11 5l3 -4l3 4v5h-6z" fill="#dfe3e6"/><path d="M14 1l3 4v5h-3z" fill="#b5bbc0"/><path d="M5 9h3v4h-3zM20 9h3v4h-3z" fill="#d5d9dc"/><circle cx="22" cy="17.500" r="3.300" fill="#4cae1c"/><circle cx="25.500" cy="20" r="2.400" fill="#5cc024"/><path d="M3 14l2 -5l2 5v5h-4z" fill="#4cae1c"/><path d="M21.500 20.500h1v3.500h-1zM25 22h1v3h-1z" fill="#a0661c"/></svg>
<svg style="left:761.48px;top:48.98px;" width="26.040000000000003" height="26.040000000000003" viewBox="0 0 28 28"><path d="M14 1L25.500 7.500L26 19L15 26.500L3.500 20L2.500 8z" fill="#a9a9a9"/><path d="M14 1L8.500 15L21.500 15z" fill="#e9e9e9"/><path d="M8.500 15L21.500 15L15 26.500z" fill="#c9c9c9"/><path d="M14 1L2.500 8L8.500 15z" fill="#bdbdbd"/><path d="M14 1L25.500 7.500L21.500 15z" fill="#8d8d8d"/><path d="M21.500 15L26 19L15 26.500z" fill="#777"/><path d="M8.500 15L3.500 20L15 26.500z" fill="#9b9b9b"/><path d="M14 1L8.500 15L21.500 15zM8.500 15L15 26.500L21.500 15M2.500 8L8.500 15L3.500 20M25.500 7.500L21.500 15L26 19" fill="none" stroke="#555" stroke-width="0.5"/></svg>
<svg style="left:26px;top:174px;" width="22" height="22" viewBox="0 0 22 22"><rect x="0" y="0" width="3" height="3" rx="0.800" fill="#f0f0f0"/><rect x="0" y="7.5" width="3" height="3" rx="0.800" fill="#f0f0f0"/><rect x="0" y="15" width="3" height="3" rx="0.800" fill="#f0f0f0"/><rect x="7.5" y="0" width="3" height="3" rx="0.800" fill="#f0f0f0"/><rect x="7.5" y="7.5" width="3" height="3" rx="0.800" fill="#f0f0f0"/><rect x="7.5" y="15" width="3" height="3" rx="0.800" fill="#f0f0f0"/><rect x="15" y="0" width="3" height="3" rx="0.800" fill="#f0f0f0"/><rect x="15" y="7.5" width="3" height="3" rx="0.800" fill="#f0f0f0"/><rect x="15" y="15" width="3" height="3" rx="0.800" fill="#f0f0f0"/><path d="M15 19.500h7l-3.500 4z" fill="#9a9a9a"/></svg>
<svg style="left:716px;top:171px;" width="32" height="30" viewBox="0 0 32 30"><ellipse cx="14" cy="17" rx="11.500" ry="4.500" fill="none" stroke="#3f66b0" stroke-width="2.200"/><path d="M4 19.500a11.500 4.500 0 0 0 9 2" fill="none" stroke="#e8e8e8" stroke-width="2"/><g transform="translate(12.500 5) scale(0.72)"><path d="M0 0v15l3.500 -3l2.500 5.500l2 -1l-2.500 -5.500h4.500z" fill="#f4f4f4" stroke="#1a1a1a" stroke-width="0.900"/></g></svg>
<svg style="left:738.0px;top:193.0px;" width="7" height="5" viewBox="0 0 7 5"><path d="M0 0h7l-3.5 5z" fill="#8a8a8a"/></svg>
<svg style="left:757px;top:171px;" width="32" height="30" viewBox="0 0 32 30"><path d="M4 6c5 -2 8 -1 10 2M13 14c3 3 7 4 11 3" fill="none" stroke="#3f72c0" stroke-width="2.400"/><path d="M3 4l5 -1l-2 4zM26 17l-5 2.500l1 -4.500z" fill="#3f72c0"/><g transform="translate(12 4.500) scale(0.72)"><path d="M0 0v15l3.500 -3l2.500 5.500l2 -1l-2.500 -5.500h4.500z" fill="#f4f4f4" stroke="#1a1a1a" stroke-width="0.900"/></g></svg>
<svg style="left:778.5px;top:193.0px;" width="7" height="5" viewBox="0 0 7 5"><path d="M0 0h7l-3.5 5z" fill="#8a8a8a"/></svg>
<svg style="left:797px;top:170px;" width="34" height="32" viewBox="0 0 34 32"><path d="M3 9.500l13 -3v9l-13 3z" fill="#2a2f33"/><ellipse cx="3.500" cy="14" rx="2" ry="4.500" fill="#5a6368"/><path d="M11 7.500v9" stroke="#d03020" stroke-width="1"/><path d="M4 21c5 -3 12 -3 18 -1M5 26c6 2 12 1 17 -2" fill="none" stroke="#3f72c0" stroke-width="2.600"/><path d="M2 25l5 -2l0 5zM25 19l-5 -1.500l1 5z" fill="#6a9ae0"/><g transform="translate(19 3) scale(0.72)"><path d="M0 0v15l3.500 -3l2.500 5.500l2 -1l-2.500 -5.500h4.500z" fill="#f4f4f4" stroke="#1a1a1a" stroke-width="0.900"/></g></svg>
<svg style="left:819.5px;top:193.0px;" width="7" height="5" viewBox="0 0 7 5"><path d="M0 0h7l-3.5 5z" fill="#8a8a8a"/></svg>
<div style="left:833.5px;top:169px;width:1px;height:30px;background:#4c4c4c;"></div>
<div style="left:868.5px;top:169px;width:1px;height:30px;background:#4c4c4c;"></div>
<div style="left:904.5px;top:169px;width:1px;height:30px;background:#4c4c4c;"></div>
<div style="left:945.5px;top:169px;width:1px;height:30px;background:#4c4c4c;"></div>
<div style="left:840px;top:170.5px;width:27px;height:28.5px;background:linear-gradient(#6483ad,#587aa6);border:1px solid #3e5878;"></div>
<svg style="left:842px;top:173px;" width="24" height="24" viewBox="0 0 24 24"><circle cx="7" cy="9" r="5" fill="#e2e2e2" stroke="#8a8a8a" stroke-width="0.800"/><circle cx="7" cy="9" r="2" fill="#9a9a9a"/><circle cx="15" cy="5.500" r="4.500" fill="#f0f0f0" stroke="#8a8a8a" stroke-width="0.800"/><circle cx="15" cy="5.500" r="1.800" fill="#9a9a9a"/><path d="M9 13l8 -2.500v8l-8 3z" fill="#d8d8d8" stroke="#8a8a8a" stroke-width="0.600"/><path d="M17 11.500l5 -1.500v7l-5 1z" fill="#efefef" stroke="#8a8a8a" stroke-width="0.600"/><path d="M3 16l3 -2l2 6l-3 1.500z" fill="#e6e6e6" stroke="#8a8a8a" stroke-width="0.600"/><rect x="11.500" y="14.500" width="3.500" height="3.500" fill="#b0b0b0"/></svg>
<svg style="left:873px;top:174px;" width="24" height="24" viewBox="0 0 24 24"><rect x="1.500" y="2" width="15" height="12" rx="2.500" fill="#d8dde2" stroke="#3a3a3a" stroke-width="1.800"/><path d="M9 4.500v7M5 8h8" stroke="#3f72c0" stroke-width="1.400"/><path d="M3 8l2 -1.500v3zM15 8l-2 -1.500v3z" fill="#3f72c0"/><path d="M15.500 14l4.500 5" stroke="#7a7a7a" stroke-width="2"/></svg>
<svg style="left:914px;top:173.5px;" width="22" height="22" viewBox="0 0 22 22"><circle cx="11" cy="11" r="9.800" fill="none" stroke="#5e3434" stroke-width="1.800"/><rect x="4" y="7" width="14" height="8" rx="1.500" fill="#3c3c3c" stroke="#2a2a2a" stroke-width="0.800"/><rect x="6.500" y="9.500" width="9" height="3" fill="#2a2a2a"/></svg>
<svg style="left:953px;top:171px;" width="28" height="28" viewBox="0 0 28 28"><ellipse cx="7" cy="4" rx="6.500" ry="1.800" fill="#e8e8e8"/><ellipse cx="20" cy="4" rx="6.500" ry="1.800" fill="#e8e8e8"/><path d="M7 4.500l5 3M20 4.500l-5 3" stroke="#d0d0d0" stroke-width="1.600"/><circle cx="13.500" cy="7" r="2.800" fill="#dedede"/><circle cx="13.500" cy="17" r="8.300" fill="#d8d4cc"/><circle cx="13.500" cy="18" r="5.500" fill="#1c2a3c"/><circle cx="13.500" cy="18" r="3.300" fill="#2f8ad0"/><circle cx="12.500" cy="17" r="1.200" fill="#bfe4ff"/><circle cx="6.500" cy="15.500" r="1" fill="#e02020"/></svg>
<div style="left:986px;top:174px;width:20px;height:19.5px;background:#f2f2f2;border-top:3px solid #9a9a9a;"></div>
<svg style="left:986px;top:176px;" width="20" height="18" viewBox="0 0 20 18"><g stroke="#111" stroke-width="2.200" stroke-linecap="butt"><path d="M10 2v14M3 9h14M5 4l10 10M15 4l-10 10"/></g><circle cx="10" cy="9" r="4.200" fill="#111"/><circle cx="10" cy="9" r="1.900" fill="#f2f2f2"/></svg>
<svg width="0" height="0" style="left:0;top:0"><defs><radialGradient id="gBlu2" cx="0.4" cy="0.35" r="0.7"><stop offset="0" stop-color="#7aa4e0"/><stop offset="1" stop-color="#1f4a98"/></radialGradient><radialGradient id="gHelp" cx="0.5" cy="0.3" r="0.8"><stop offset="0" stop-color="#3c464c"/><stop offset="1" stop-color="#101214"/></radialGradient></defs></svg>
<svg style="left:1676px;top:171px;" width="28" height="28" viewBox="0 0 28 28"><circle cx="7" cy="5.5" r="3.400" fill="url(#gBlu2)"/><path d="M3.2 12.0l1 -3h5.600l1 3z" fill="#e8e8e8"/><circle cx="17" cy="10" r="3.400" fill="url(#gBlu2)"/><path d="M13.2 16.5l1 -3h5.600l1 3z" fill="#e8e8e8"/><circle cx="7.5" cy="17" r="3.400" fill="url(#gBlu2)"/><path d="M3.7 23.5l1 -3h5.600l1 3z" fill="#e8e8e8"/></svg>
<svg style="left:1694.0px;top:193.0px;" width="7" height="5" viewBox="0 0 7 5"><path d="M0 0h7l-3.5 5z" fill="#8a8a8a"/></svg>
<svg style="left:1707.6000000000001px;top:172.39999999999998px;" width="20.6" height="20.6" viewBox="0 0 20.6 20.6"><circle cx="10.3" cy="10.3" r="9.3" fill="url(#gHelp)" stroke="#f0f0f0" stroke-width="1.300"/></svg>
<span class="t" style="top:176.03px;font-size:14px;color:#ffffff;left:1717.90px;transform:translateX(-50%);font-weight:bold;">?</span>
<svg style="left:2528.9px;top:-0.3000000000000007px;" width="20.8" height="20.8" viewBox="0 0 20.8 20.8"><circle cx="10.4" cy="10.4" r="9.4" fill="url(#gHelp)" stroke="#f0f0f0" stroke-width="1.300"/></svg>
<span class="t" style="top:3.43px;font-size:14px;color:#ffffff;left:2539.30px;transform:translateX(-50%);font-weight:bold;">?</span>
<svg style="left:1575.5px;top:134px;" width="24" height="18" viewBox="0 0 24 18"><ellipse cx="13" cy="16.500" rx="10" ry="1" fill="#1c1c1c" opacity="0.500"/><path d="M0 9l9 -1.500v3z" fill="#f4f4f4"/><path d="M9 5l3 -3.500v15l-3 -3.500z" fill="url(#gMet)"/><path d="M12 6h7v6h-7z" fill="#bdbdbd"/><path d="M19 3h2.500v12h-2.500z" fill="#e4e4e4"/></svg>
<svg style="left:1604px;top:131px;" width="24" height="24" viewBox="0 0 24 24"><circle cx="12" cy="12" r="10.500" fill="none" stroke="#6a8fc8" stroke-width="1.500"/><circle cx="12" cy="12" r="6.800" fill="none" stroke="#6a8fc8" stroke-width="1.100"/><circle cx="12" cy="12" r="3" fill="#3f78c8"/></svg>
<svg style="left:2502.5px;top:134px;" width="24" height="18" viewBox="0 0 24 18"><ellipse cx="13" cy="16.500" rx="10" ry="1" fill="#1c1c1c" opacity="0.500"/><path d="M0 9l9 -1.500v3z" fill="#f4f4f4"/><path d="M9 5l3 -3.500v15l-3 -3.500z" fill="url(#gMet)"/><path d="M12 6h7v6h-7z" fill="#bdbdbd"/><path d="M19 3h2.500v12h-2.500z" fill="#e4e4e4"/></svg>
<svg style="left:2531px;top:131px;" width="24" height="24" viewBox="0 0 24 24"><circle cx="12" cy="12" r="10.500" fill="none" stroke="#6a8fc8" stroke-width="1.500"/><circle cx="12" cy="12" r="6.800" fill="none" stroke="#6a8fc8" stroke-width="1.100"/><circle cx="12" cy="12" r="3" fill="#3f78c8"/></svg>
<svg style="left:2502.5px;top:776px;" width="24" height="18" viewBox="0 0 24 18"><ellipse cx="13" cy="16.500" rx="10" ry="1" fill="#1c1c1c" opacity="0.500"/><path d="M0 9l9 -1.500v3z" fill="#f4f4f4"/><path d="M9 5l3 -3.500v15l-3 -3.500z" fill="url(#gMet)"/><path d="M12 6h7v6h-7z" fill="#bdbdbd"/><path d="M19 3h2.500v12h-2.500z" fill="#e4e4e4"/></svg>
<svg style="left:2531px;top:773px;" width="24" height="24" viewBox="0 0 24 24"><circle cx="12" cy="12" r="10.500" fill="none" stroke="#6a8fc8" stroke-width="1.500"/><circle cx="12" cy="12" r="6.800" fill="none" stroke="#6a8fc8" stroke-width="1.100"/><circle cx="12" cy="12" r="3" fill="#3f78c8"/></svg>
<svg style="left:1647px;top:131px;" width="24" height="26" viewBox="0 0 24 26"><path d="M1 5l11 -4l9.500 4v12.500l-9.500 5.500l-11 -5z" fill="#7f95a8"/><path d="M1 5l11 -4l9.500 4l-10 4z" fill="#dfe7ee"/><path d="M1 5l10.500 4v14l-10.500 -5z" fill="#b4c3d0"/><path d="M11.500 9l10 -4v12.500l-10 5.500z" fill="#5f7890"/></svg>
<svg style="left:1664.5px;top:152.5px;" width="7" height="5" viewBox="0 0 7 5"><path d="M0 0h7l-3.5 5z" fill="#8a8a8a"/></svg>
<svg style="left:1676px;top:131px;" width="26" height="26" viewBox="0 0 26 26"><rect x="2" y="1.500" width="8.500" height="14" rx="4" fill="#4e4e4e" stroke="#8a8a8a" stroke-width="0.900"/><path d="M9.500 9.500l5.500 11.500a6 2 0 0 1 -11.500 0z" fill="#444" fill-opacity="0.700" stroke="#9a9a9a" stroke-width="0.900"/><circle cx="16.500" cy="12" r="7" fill="url(#gBlu2)"/><circle cx="14.500" cy="9.500" r="2.500" fill="#cfe0fa" opacity="0.700"/></svg>
<svg style="left:1694.5px;top:152.5px;" width="7" height="5" viewBox="0 0 7 5"><path d="M0 0h7l-3.5 5z" fill="#8a8a8a"/></svg>
<div style="left:1707.5px;top:133px;width:20.5px;height:20px;background:linear-gradient(135deg,#e6e6e6,#d2d2d2);border:1px solid #2a2a2a;"></div>
<svg style="left:1725.0px;top:152.5px;" width="7" height="5" viewBox="0 0 7 5"><path d="M0 0h7l-3.5 5z" fill="#8a8a8a"/></svg>
<div style="left:14px;top:222.5px;width:30.5px;height:30.0px;background:linear-gradient(#6584ae,#5a7aa5);border:1px solid #3c5577;"></div>
<div style="left:14px;top:253.5px;width:30.5px;height:29.0px;background:linear-gradient(#4c4c4c,#3a3a3a);border:1px solid #1e1e1e;"></div>
<div style="left:14px;top:283.5px;width:30.5px;height:29.0px;background:linear-gradient(#4c4c4c,#3a3a3a);border:1px solid #1e1e1e;"></div>
<svg style="left:15.5px;top:223.0px;" width="28" height="28" viewBox="0 0 28 28"><circle cx="19" cy="10" r="6.500" fill="#5a5a5a" stroke="#2a2a2a" stroke-width="0.800"/><path d="M11 3l7.500 17a7.500 3 0 0 1 -15 0z" fill="#f2cf3a" stroke="#7a6410" stroke-width="0.800"/><path d="M11 3l-3 18" stroke="#fff2a8" stroke-width="1.500" opacity="0.700"/></svg>
<svg style="left:38.5px;top:243.5px;" width="5" height="7" viewBox="0 0 5 7"><path d="M0 0v7l5 -3.500z" fill="#222"/></svg>
<svg style="left:15.5px;top:254.0px;" width="28" height="28" viewBox="0 0 28 28"><path d="M14 3l5.500 5.500l-5.500 5.500l-5.500 -5.500zM7.500 9.500l5.500 5.500l-5.500 5.500l-5.500 -5.500zM20.500 9.500l5.500 5.500l-5.500 5.500l-5.500 -5.500z" fill="#7a7a7a" stroke="#555" stroke-width="0.500" transform="translate(0 -1)"/><path d="M14 15l5.500 5.500l-5.500 5.500l-5.500 -5.500z" fill="#f2d548" stroke="#8a7414" stroke-width="0.700" transform="translate(0 -1)"/></svg>
<svg style="left:38.5px;top:273.5px;" width="5" height="7" viewBox="0 0 5 7"><path d="M0 0v7l5 -3.500z" fill="#8a8a8a"/></svg>
<svg style="left:15.5px;top:284.0px;" width="28" height="28" viewBox="0 0 28 28"><circle cx="12" cy="13" r="11" fill="url(#gGlow)"/><path d="M8 8.500l9 -4.500l6.500 7l-2.500 10l-9.500 3.500l-5 -8z" fill="#e6c91c"/><path d="M8 8.500l9 -4.500l6.500 7l-8.500 3z" fill="#fbf08a"/><path d="M15 14l8.500 -3l-2.500 10l-9.500 3.500z" fill="#b89a10"/></svg>
<svg style="left:38.5px;top:303.5px;" width="5" height="7" viewBox="0 0 5 7"><path d="M0 0v7l5 -3.500z" fill="#8a8a8a"/></svg>
<div style="left:10px;top:322px;width:38px;height:1px;background:#4c4c4c;"></div>
<svg style="left:15.5px;top:332.0px;" width="28" height="28" viewBox="0 0 28 28"><path d="M8 2v19l4.500 -4l3.500 7.500l3 -1.500l-3.500 -7h6.500z" fill="#0a0a0a" stroke="#e8e8e8" stroke-width="1.300"/></svg>
<svg style="left:41px;top:354.5px;" width="5" height="7" viewBox="0 0 5 7"><path d="M0 0v7l5 -3.500z" fill="#8a8a8a"/></svg>
<div style="left:12.5px;top:364px;width:33.5px;height:33.5px;background:linear-gradient(#6584ae,#5a7aa5);border:1px solid #3c5577;"></div>
<svg style="left:15.5px;top:366.5px;" width="28" height="28" viewBox="0 0 28 28"><path d="M9.500 12v-3.500a4.500 4.500 0 0 1 9 0v3.500" fill="none" stroke="#e8e8e8" stroke-width="2.200"/><rect x="7" y="12" width="14" height="11" rx="1" fill="#e8e8e8"/><path d="M11.500 14v7l2 -1.800l1.500 2.800l1 -0.500l-1.400 -2.800h2.600z" fill="#5a7aa5"/></svg>
<svg style="left:15.5px;top:401.0px;" width="28" height="28" viewBox="0 0 28 28"><path d="M9 5l5 -2l5 2v6l-5 2.500l-5 -2.500z" fill="#b8c0c6"/><path d="M9 5l5 2l5 -2l-5 -2z" fill="#e8ecef"/><path d="M14 7v6.500l5 -2.500v-6z" fill="#8a949c"/><path d="M8 10l-5 5l2 0l-1 3l4 -2l1 2l1 -6zM20 10l5 5l-2 0l1 3l-4 -2l-1 2l-1 -6zM11 16l-3 6l3 -1l3 3l3 -3l3 1l-3 -6z" fill="#d8281c"/></svg>
<svg style="left:15.5px;top:437.0px;" width="28" height="28" viewBox="0 0 28 28"><path d="M4 15c-2 4 2 8 8 8.500l0 2.500l5 -4l-5 -3.500v2c-3 -0.500 -5 -2 -4 -4zM24 15c2 4 -2 8 -6 8.500" fill="#e04818"/><path d="M3 14c0 5 5 8 11 8" fill="none" stroke="#e04818" stroke-width="2.800"/><path d="M25 14c0 4 -3 7 -8 8l0 -3.500l-5 4.500l5 4v-2.500" fill="none" stroke="#e86820" stroke-width="0"/><path d="M25 13c0.500 4 -2 7 -6 8.500" fill="none" stroke="#e04818" stroke-width="2.800"/><path d="M21 18l-1 6.500l-5.500 -3.500z" fill="#e04818"/><circle cx="14" cy="10" r="6" fill="url(#gSph)" stroke="#4a4a4a" stroke-width="0.600"/></svg>
<svg style="left:15.5px;top:471.5px;" width="28" height="28" viewBox="0 0 28 28"><path d="M14 1l3.500 5h-2.500v5h-2v-5h-2.500zM3 25l1 -6l1.800 1.800l4 -3l1.400 1.400l-3.500 3.500l1.800 1.800zM25 25l-6 0.500l1.800 -1.800l-3.500 -3.500l1.400 -1.400l4 3l1.800 -1.800z" fill="#d8281c"/><path d="M9.500 11l4.500 -2l4.500 2v6l-4.500 2.500l-4.500 -2.500z" fill="#8a949c" stroke="#444" stroke-width="0.600"/><path d="M9.500 11l4.500 2l4.500 -2l-4.500 -2z" fill="#c8d0d6"/><rect x="12.800" y="13.500" width="2.400" height="2.400" fill="#d8dde2"/></svg>
<svg style="left:15.5px;top:506.0px;" width="28" height="28" viewBox="0 0 28 28"><circle cx="10" cy="5" r="2.300" fill="#f0f0f0"/><path d="M10 7.500l4 5l4 -6M14 12.500l-3.500 6l1.500 7M14 12.500l4.500 5l-1.500 6.500" fill="none" stroke="#f0f0f0" stroke-width="2.200" stroke-linejoin="round"/><circle cx="14" cy="12.500" r="1.600" fill="#d8281c"/><circle cx="10.500" cy="18.500" r="1.500" fill="#d8281c"/><circle cx="18.500" cy="17.500" r="1.500" fill="#d8281c"/><circle cx="12" cy="25" r="1.300" fill="#d8281c"/></svg>
<svg style="left:15.5px;top:541.0px;" width="28" height="28" viewBox="0 0 28 28"><circle cx="13" cy="16" r="6.500" fill="#f0c828" stroke="#8a6a10" stroke-width="0.800"/><circle cx="13" cy="16" r="3" fill="#6a6a6a"/><path d="M13 1l4.500 8h-9z" fill="#48c038" stroke="#1e6a18" stroke-width="0.600"/><path d="M27 21l-8.500 2.500l1.500 -8z" fill="#e03838" stroke="#7a1818" stroke-width="0.600"/><path d="M1 23l7.500 -6l2 7z" fill="#5a8ae0" stroke="#203a7a" stroke-width="0.600"/></svg>
<svg style="left:41px;top:562px;" width="5" height="7" viewBox="0 0 5 7"><path d="M0 0v7l5 -3.500z" fill="#8a8a8a"/></svg>
<div style="left:12px;top:578px;width:35px;height:1px;background:#4c4c4c;"></div>
<svg style="left:15.5px;top:587.5px;" width="28" height="28" viewBox="0 0 28 28"><path d="M7 22v-8.500a7 7 0 0 1 14 0v8.500" fill="none" stroke="#d82020" stroke-width="4.500"/><rect x="4.700" y="19.500" width="4.600" height="3.500" fill="#e8e8e8"/><rect x="18.700" y="19.500" width="4.600" height="3.500" fill="#e8e8e8"/></svg>
<svg style="left:41px;top:611px;" width="5" height="7" viewBox="0 0 5 7"><path d="M0 0v7l5 -3.500z" fill="#8a8a8a"/></svg>
<svg style="left:15.5px;top:622.0px;" width="28" height="28" viewBox="0 0 28 28"><path d="M8 19v-7a6 6 0 0 1 12 0v7" fill="none" stroke="#d8d8d8" stroke-width="4"/><path d="M8 19v-7a6 6 0 0 1 12 0v7" fill="none" stroke="#9a9a9a" stroke-width="1.600"/><path d="M14 19l1.300 2.700l3 0.400l-2.200 2.100l0.500 3l-2.600 -1.400l-2.600 1.400l0.500 -3l-2.200 -2.100l3 -0.400z" fill="#e02020"/></svg>
<svg style="left:39.5px;top:648.25px;" width="6" height="4.5" viewBox="0 0 6 4.5"><path d="M0 0h6l-3.0 4.5z" fill="#8a8a8a"/></svg>
<div style="left:12px;top:659px;width:35px;height:1px;background:#4c4c4c;"></div>
<div style="left:12.5px;top:666px;width:33.5px;height:33px;background:linear-gradient(#6584ae,#5a7aa5);border:1px solid #3c5577;"></div>
<svg style="left:16px;top:669px;" width="28" height="28" viewBox="0 0 24 24"><circle cx="7" cy="9" r="5" fill="#3a3a3a" stroke="#111" stroke-width="0.800"/><circle cx="7" cy="9" r="2" fill="#d0d0d0"/><circle cx="15" cy="5.500" r="4.500" fill="#444" stroke="#111" stroke-width="0.800"/><circle cx="15" cy="5.500" r="1.800" fill="#d0d0d0"/><path d="M9 13l8 -2.500v8l-8 3z" fill="#2c2c2c" stroke="#111" stroke-width="0.600"/><path d="M17 11.500l5 -1.500v7l-5 1z" fill="#3a3a3a" stroke="#111" stroke-width="0.600"/><path d="M3 16l3 -2l2 6l-3 1.500z" fill="#333" stroke="#111" stroke-width="0.600"/><rect x="11.500" y="14.500" width="3.500" height="3.500" fill="#ddd"/></svg>
<svg style="left:41px;top:689.5px;" width="5" height="7" viewBox="0 0 5 7"><path d="M0 0v7l5 -3.500z" fill="#222"/></svg>
<svg style="left:15.5px;top:703.0px;" width="28" height="28" viewBox="0 0 28 28"><circle cx="12" cy="12" r="10" fill="#3a3a3a" stroke="#e8e8e8" stroke-width="1.600"/><ellipse cx="12" cy="12" rx="4.500" ry="10" fill="none" stroke="#e8e8e8" stroke-width="1"/><path d="M2 12h20" stroke="#e8e8e8" stroke-width="1"/><rect x="14.500" y="13.500" width="12" height="12" fill="url(#gMet)" stroke="#d83030" stroke-width="1.300"/></svg>
<svg style="left:15.5px;top:739.0px;" width="28" height="28" viewBox="0 0 28 28"><ellipse cx="14" cy="20" rx="12" ry="6" fill="#dfe8ee"/><path d="M2 19a12 6 0 0 0 24 0" fill="#b8d8ee"/><ellipse cx="14" cy="11" rx="9" ry="4" fill="#1a1a1a"/><path d="M5 11v6a9 4 0 0 0 18 0v-6" fill="#2a2a2a"/><path d="M6 13v5M8.500 14v5.500M11 14.500v5.500M14 14.800v5.500M17 14.500v5.500M19.500 14v5.500M22 13v5" stroke="#8a8a8a" stroke-width="0.800"/><ellipse cx="14" cy="11" rx="6" ry="2.500" fill="#4a4a4a" stroke="#9a9a9a" stroke-width="0.600"/></svg>
<svg style="left:41px;top:762px;" width="5" height="7" viewBox="0 0 5 7"><path d="M0 0v7l5 -3.500z" fill="#8a8a8a"/></svg>
<svg style="left:15px;top:1307px;" width="26" height="22" viewBox="0 0 26 22"><path d="M1 9l12 -6l10 7l-13 7z" fill="#d86a28"/><path d="M1 7.500l12 -6l10 7l-13 7z" fill="#b8d4e4"/><path d="M1 6l12 -6l10 7l-13 7z" fill="#f4f8fa"/><path d="M5 6.500l9 -4.500M8 9l9 -4.500" stroke="#c8d8e0" stroke-width="1"/><path d="M15 4l8 -2.500l-1 3z" fill="#e8eef2"/></svg>
<svg style="left:36px;top:1324.5px;" width="5" height="7" viewBox="0 0 5 7"><path d="M0 0v7l5 -3.500z" fill="#8a8a8a"/></svg>
<svg style="left:15px;top:1339px;" width="30" height="26" viewBox="0 0 30 26"><ellipse cx="12.500" cy="12.500" rx="11.500" ry="8.500" fill="#a8a8a0"/><ellipse cx="12.500" cy="10.500" rx="11.500" ry="8.500" fill="#deded6"/><ellipse cx="9" cy="6" rx="2.800" ry="2" fill="#8c8c86"/><ellipse cx="16.500" cy="7" rx="2.800" ry="2" fill="#8c8c86"/><ellipse cx="6.500" cy="11" rx="2.800" ry="2" fill="#8c8c86"/><ellipse cx="13.500" cy="13.500" rx="3" ry="2.200" fill="#8c8c86"/><path d="M20 16.500c4 0.500 6 2 5.500 5" fill="none" stroke="#9a9a94" stroke-width="2.600"/></svg>
<svg style="left:41px;top:1357px;" width="5" height="7" viewBox="0 0 5 7"><path d="M0 0v7l5 -3.500z" fill="#8a8a8a"/></svg>
<svg style="left:3px;top:790px;" width="4" height="6" viewBox="0 0 4 6"><path d="M0 0v6l3.500 -3z" fill="#666"/></svg>
<svg style="left:3px;top:983px;" width="4" height="6" viewBox="0 0 4 6"><path d="M0 0v6l3.500 -3z" fill="#666"/></svg>
<svg style="left:2px;top:845px;" width="5" height="45" viewBox="0 0 5 45"><rect x="0" y="0" width="1" height="1" fill="#777"/><rect x="0" y="3" width="1" height="1" fill="#777"/><rect x="0" y="6" width="1" height="1" fill="#777"/><rect x="0" y="9" width="1" height="1" fill="#777"/><rect x="0" y="12" width="1" height="1" fill="#777"/><rect x="0" y="15" width="1" height="1" fill="#777"/><rect x="0" y="18" width="1" height="1" fill="#777"/><rect x="0" y="21" width="1" height="1" fill="#777"/><rect x="0" y="24" width="1" height="1" fill="#777"/><rect x="0" y="27" width="1" height="1" fill="#777"/><rect x="0" y="30" width="1" height="1" fill="#777"/><rect x="0" y="33" width="1" height="1" fill="#777"/><rect x="0" y="36" width="1" height="1" fill="#777"/><rect x="0" y="39" width="1" height="1" fill="#777"/><rect x="0" y="42" width="1" height="1" fill="#777"/><rect x="2.5" y="0" width="1" height="1" fill="#777"/><rect x="2.5" y="3" width="1" height="1" fill="#777"/><rect x="2.5" y="6" width="1" height="1" fill="#777"/><rect x="2.5" y="9" width="1" height="1" fill="#777"/><rect x="2.5" y="12" width="1" height="1" fill="#777"/><rect x="2.5" y="15" width="1" height="1" fill="#777"/><rect x="2.5" y="18" width="1" height="1" fill="#777"/><rect x="2.5" y="21" width="1" height="1" fill="#777"/><rect x="2.5" y="24" width="1" height="1" fill="#777"/><rect x="2.5" y="27" width="1" height="1" fill="#777"/><rect x="2.5" y="30" width="1" height="1" fill="#777"/><rect x="2.5" y="33" width="1" height="1" fill="#777"/><rect x="2.5" y="36" width="1" height="1" fill="#777"/><rect x="2.5" y="39" width="1" height="1" fill="#777"/><rect x="2.5" y="42" width="1" height="1" fill="#777"/></svg>
<div style="left:1705px;top:218px;width:27.5px;height:28.5px;background:linear-gradient(#6584ae,#5a7aa5);border:1px solid #3c5577;"></div>
<svg style="left:1705.0px;top:221.5px;" width="26" height="26" viewBox="0 0 26 26"><path d="M2 13l11 -5l11 5l-11 5z" fill="#1c2a30" stroke="#f0f0f0" stroke-width="1.300"/><path d="M7.500 10.500l11 5M18.500 10.500l-11 5" stroke="#f0f0f0" stroke-width="1.300"/></svg>
<svg style="left:1727.5px;top:239.5px;" width="5" height="7" viewBox="0 0 5 7"><path d="M0 0v7l5 -3.500z" fill="#222"/></svg>
<svg style="left:1705.0px;top:251.0px;" width="26" height="26" viewBox="0 0 26 26"><path d="M3 5l15 -2l5 15l-16 3z" fill="#2a3a2a" stroke="#7ac848" stroke-width="1.500"/><path d="M8 13a5 5 0 1 0 5 -5" fill="none" stroke="#f0f0f0" stroke-width="1.300"/><path d="M13 8v6h-3" fill="none" stroke="#7ac848" stroke-width="1.300"/></svg>
<svg style="left:1728px;top:269px;" width="5" height="7" viewBox="0 0 5 7"><path d="M0 0v7l5 -3.500z" fill="#8a8a8a"/></svg>
<svg style="left:1705.0px;top:281.0px;" width="26" height="26" viewBox="0 0 26 26"><path d="M8.500 12v-4a4.500 4.500 0 0 1 9 0v1.500" fill="none" stroke="#e0e0e0" stroke-width="2.200"/><rect x="6" y="12" width="14" height="11" rx="1" fill="#e4e4e4"/><path d="M6 15.500h14M6 19h14" stroke="#9a9a9a" stroke-width="0.800"/></svg>
<svg style="left:1705.0px;top:311.5px;" width="26" height="26" viewBox="0 0 26 26"><circle cx="13" cy="10" r="6.800" fill="#3a3a3a" stroke="#f0f0f0" stroke-width="1.300"/><path d="M10 7l6 6M16 7l-6 6" stroke="#f0f0f0" stroke-width="1.600"/><path d="M10.500 18h5M10.500 20.500h5M11.500 23h3" stroke="#d0d0d0" stroke-width="1.300"/></svg>
<svg style="left:1705.0px;top:342.5px;" width="26" height="26" viewBox="0 0 26 26"><path d="M13 1.500l11.500 11.500l-11.500 11.500l-11.500 -11.500z" fill="#2c2c2c" stroke="#f0f0f0" stroke-width="1.500"/><circle cx="13" cy="11" r="4.300" fill="#f0f0f0"/><rect x="11" y="15" width="4" height="4.500" fill="#e0e0e0"/></svg>
<svg style="left:1728px;top:361px;" width="5" height="7" viewBox="0 0 5 7"><path d="M0 0v7l5 -3.500z" fill="#8a8a8a"/></svg>
<div style="left:1705px;top:373px;width:27.5px;height:28.5px;background:linear-gradient(#6584ae,#5a7aa5);border:1px solid #3c5577;"></div>
<svg style="left:1705.0px;top:373.5px;" width="26" height="26" viewBox="0 0 26 26"><circle cx="13" cy="10" r="7.500" fill="#e8e8e0" stroke="#4a4a4a" stroke-width="0.800"/><path d="M10 16.500h6v2h-6zM10 19h6v2h-6zM11 21.500h4v1.500h-4z" fill="#c8c8c8" stroke="#555" stroke-width="0.500"/><path d="M9 8a4.500 4.500 0 0 1 4 -3" fill="none" stroke="#fff" stroke-width="1.500"/></svg>
<svg style="left:1727.5px;top:394.5px;" width="5" height="7" viewBox="0 0 5 7"><path d="M0 0v7l5 -3.500z" fill="#222"/></svg>
<div style="left:1705px;top:407px;width:27.5px;height:28.5px;background:linear-gradient(#6584ae,#5a7aa5);border:1px solid #3c5577;"></div>
<svg style="left:1705.0px;top:408.0px;" width="26" height="26" viewBox="0 0 26 26"><path d="M3 7l10 -4l10 4v12l-10 5l-10 -5z" fill="#f0f0f0" stroke="#3a3a3a" stroke-width="0.700"/><path d="M3 7l5 2.500v6l-5 -2.500zM8 15.500l5 2.500v6l-5 -2.500zM13 12l5 -2.500v6l-5 2.500zM18 15.500l5 -2.500v6l-5 2.500zM8 5l5 2l5 -2l-5 -2zM8 9.500l5 2.500l5 -2.500l-5 -2.500z" fill="#1a1a1a" fill-opacity="0.920"/></svg>
<svg style="left:1727.5px;top:428.5px;" width="5" height="7" viewBox="0 0 5 7"><path d="M0 0v7l5 -3.500z" fill="#222"/></svg>
<svg style="left:1705.0px;top:438.0px;" width="26" height="26" viewBox="0 0 26 26"><path d="M2 7l9 3.500M11 10.500l11 5" stroke="#e8e8e8" stroke-width="1.500"/><ellipse cx="9" cy="12" rx="4" ry="3" transform="rotate(25 9 12)" fill="#555" stroke="#f0f0f0" stroke-width="1.400"/><ellipse cx="17.500" cy="16" rx="4" ry="3" transform="rotate(25 17.500 16)" fill="#555" stroke="#f0f0f0" stroke-width="1.400"/></svg>
<svg style="left:1725.0px;top:460.25px;" width="6" height="4.5" viewBox="0 0 6 4.5"><path d="M0 0h6l-3.0 4.5z" fill="#8a8a8a"/></svg>
<svg style="left:1705.0px;top:468.5px;" width="26" height="26" viewBox="0 0 26 26"><path d="M4 5l9 3.500M13 8.500l10 4.500" stroke="#e8e8e8" stroke-width="1.500"/><ellipse cx="11" cy="10" rx="4" ry="3" transform="rotate(25 11 10)" fill="#555" stroke="#f0f0f0" stroke-width="1.400"/><ellipse cx="19" cy="13.500" rx="4" ry="3" transform="rotate(25 19 13.500)" fill="#555" stroke="#f0f0f0" stroke-width="1.400"/><rect x="2" y="12" width="11" height="11" fill="#b0b0b0" stroke="#e8e8e8" stroke-width="0.800"/><path d="M5.500 14.500v6l5 -3z" fill="#f4f4f4"/></svg>
<svg style="left:1728px;top:488px;" width="5" height="7" viewBox="0 0 5 7"><path d="M0 0v7l5 -3.500z" fill="#8a8a8a"/></svg>
<div style="left:1706px;top:497px;width:26px;height:1px;background:#4c4c4c;"></div>
<svg style="left:1705.0px;top:505.5px;" width="26" height="26" viewBox="0 0 26 26"><circle cx="13" cy="13" r="3.300" fill="#e8e8e8"/></svg>
<svg style="left:1705.0px;top:537.5px;" width="26" height="26" viewBox="0 0 26 26"><circle cx="9" cy="17" r="3.500" fill="#555" stroke="#e8e8e8" stroke-width="1.400"/><path d="M10 16l11 -11" stroke="#e8e8e8" stroke-width="1.700"/></svg>
<svg style="left:1705.0px;top:567.0px;" width="26" height="26" viewBox="0 0 26 26"><circle cx="18" cy="7" r="3" fill="#e8e8e8"/><path d="M17 8l-11 13l9 -11z" fill="#9a9a9a"/></svg>
<svg style="left:1705.0px;top:598.0px;" width="26" height="26" viewBox="0 0 26 26"><circle cx="7.500" cy="18" r="3" fill="#e0e0e0"/><path d="M9 16l4 -4" stroke="#d0d0d0" stroke-width="1.200"/></svg>
<span class="t" style="top:599.97px;font-size:11px;color:#f0f0f0;left:1723.88px;transform:translateX(-50%);font-weight:bold;letter-spacing:-0.250px;">12</span>
<svg style="left:1705.0px;top:628.5px;" width="26" height="26" viewBox="0 0 26 26"><path d="M4 14l12 -4l5 10l-13 4z" fill="#d8d8d8"/><path d="M13 17l5 -13" stroke="#f0f0f0" stroke-width="1.800"/></svg>
<svg style="left:1705.0px;top:659.0px;" width="26" height="26" viewBox="0 0 26 26"><path d="M3 16l12 -4l5 8l-13 4z" fill="#d8d8d8"/><path d="M3 16l4 8l13 -4" fill="none" stroke="#9a9a9a" stroke-width="0.800"/></svg>
<span class="t" style="top:660.47px;font-size:11px;color:#f0f0f0;left:1724.38px;transform:translateX(-50%);font-weight:bold;letter-spacing:-0.250px;">12</span>
<svg style="left:1705.0px;top:691.5px;" width="26" height="26" viewBox="0 0 26 26"><path d="M5 5h17M5 5v17M5 22c2 -9 8 -15 17 -17" fill="none" stroke="#d8dcd8" stroke-width="1.600"/><circle cx="5" cy="5" r="2" fill="#e8e8e8"/><circle cx="22" cy="5" r="2" fill="#e8e8e8"/><circle cx="5" cy="22" r="2" fill="#e8e8e8"/></svg>
<svg style="left:1705.0px;top:723.0px;" width="26" height="26" viewBox="0 0 26 26"><path d="M3 21l5 -10l9 -5l-3 11z" fill="#dcdcdc"/><path d="M17 6l5.500 9l-9.500 4l1 -2z" fill="#4a80c8"/></svg>
<svg style="left:1705.0px;top:754.0px;" width="26" height="26" viewBox="0 0 26 26"><rect x="3" y="3" width="20" height="20" fill="#f0f0f0"/><path d="M3 3h5v5h-5zM13 3h5v5h-5zM8 8h5v5h-5zM18 8h5v5h-5zM3 13h5v5h-5zM13 13h5v5h-5zM8 18h5v5h-5zM18 18h5v5h-5z" fill="#e8a0a8"/><path d="M8 3h5v5h-5zM18 3h5v5h-5zM3 8h5v5h-5zM13 8h5v5h-5z" fill="#a0c0e8"/></svg>
<svg style="left:1728px;top:774px;" width="5" height="7" viewBox="0 0 5 7"><path d="M0 0v7l5 -3.500z" fill="#8a8a8a"/></svg>
<svg style="left:1705.0px;top:785.5px;" width="26" height="26" viewBox="0 0 26 26"><path d="M2 13l11 -8l11 8l-11 8z" fill="#e0e0e0" stroke="#4a90e0" stroke-width="1.500"/><path d="M13 7l5 6l-5 5l-5 -5z" fill="#b0b0b0"/></svg>
<svg style="left:1705.0px;top:815.5px;" width="26" height="26" viewBox="0 0 26 26"><path d="M5 5c3 2 13 2 16 0c-2 5 -2 11 0 16c-3 -2 -13 -2 -16 0c2 -5 2 -11 0 -16z" fill="#d8d8d0" stroke="#58c028" stroke-width="2.200"/><rect x="9" y="9" width="8" height="8" fill="#e8e8e8"/></svg>
<svg style="left:1705.0px;top:847.0px;" width="26" height="26" viewBox="0 0 26 26"><path d="M2 13h9M13 13l8 -11M13 13l6 10" stroke="#e8e8e8" stroke-width="1.800"/><circle cx="13.500" cy="13.500" r="3.500" fill="#e0e0e0"/></svg>
<svg style="left:1705.0px;top:878.0px;" width="26" height="26" viewBox="0 0 26 26"><circle cx="13" cy="13" r="10.500" fill="none" stroke="#8a8a8a" stroke-width="1" stroke-dasharray="1.500 1.500"/><rect x="6.500" y="7.500" width="13" height="11" rx="2" fill="#e0e0e0"/><path d="M6.500 13h13" stroke="#7a7a7a" stroke-width="1.200"/></svg>
<div style="left:1705px;top:908.5px;width:27.5px;height:28.5px;background:linear-gradient(#6584ae,#5a7aa5);border:1px solid #3c5577;"></div>
<svg style="left:1705.0px;top:910.0px;" width="26" height="26" viewBox="0 0 26 26"><rect x="3.500" y="4.500" width="19" height="17" fill="#d8d8d8" stroke="#2a2a2a" stroke-width="1.300"/><path d="M5 19l5 -7l4 4l3 -3l4 6z" fill="#3a3a3a"/><path d="M12 4c2 -2 5 -2 6.500 0c2 0 3 2 2 3.500h-9c-1.500 -1 -1 -3 0.500 -3.500z" fill="#f4f4f4"/></svg>
<svg style="left:1727.5px;top:930px;" width="5" height="7" viewBox="0 0 5 7"><path d="M0 0v7l5 -3.500z" fill="#222"/></svg>
<div style="left:1706px;top:944px;width:26px;height:1px;background:#4c4c4c;"></div>
<div style="left:1705px;top:952.5px;width:27.5px;height:28.5px;background:linear-gradient(#6584ae,#5a7aa5);border:1px solid #3c5577;"></div>
<svg style="left:1705.0px;top:954.0px;" width="26" height="26" viewBox="0 0 26 26"><path d="M13 2.500a7 7 0 0 1 7 7c0 5 -5 8 -7 14c-2 -6 -7 -9 -7 -14a7 7 0 0 1 7 -7z" fill="#e4e4e4" stroke="#4a4a4a" stroke-width="0.800"/><circle cx="13" cy="9.500" r="3" fill="#7a7a7a"/></svg>
<svg style="left:1727.5px;top:974px;" width="5" height="7" viewBox="0 0 5 7"><path d="M0 0v7l5 -3.500z" fill="#222"/></svg>
<div style="left:1706px;top:1271.5px;width:26px;height:1px;background:#4c4c4c;"></div>
<svg style="left:1708px;top:1281.5px;" width="20" height="20" viewBox="0 0 20 20"><circle cx="10" cy="10" r="8.800" fill="url(#gHelp)" stroke="#e8e8e8" stroke-width="1.300"/></svg>
<span class="t" style="top:1284.84px;font-size:14.5px;color:#ffffff;left:1718.00px;transform:translateX(-50%);font-weight:bold;font-style:italic;font-family:'Liberation Serif',serif;">i</span>
<div style="left:1705px;top:1309.5px;width:27.5px;height:28.0px;background:linear-gradient(#6584ae,#5a7aa5);border:1px solid #3c5577;"></div>
<svg style="left:1705.0px;top:1310.5px;" width="26" height="26" viewBox="0 0 26 26"><rect x="3.500" y="3.500" width="19" height="19" fill="#e0e0e0" stroke="#e8c820" stroke-width="2.600"/><path d="M13 4v18M4 13h18" stroke="#6a6a6a" stroke-width="1.800"/></svg>
<div style="left:1708.5px;top:1343.5px;width:19px;height:19px;background:linear-gradient(#a0a0a0 0,#f4f4f4 18%,#e8e8e8 100%);border:1px solid #555;"></div>
<svg style="left:1705.0px;top:1340.5px;" width="26" height="26" viewBox="0 0 26 26"><path d="M5 13.500c3 -4.500 12 -4.500 16 0c-4 4 -13 4 -16 0z" fill="#fafafa" stroke="#1a1a1a" stroke-width="1"/><circle cx="13" cy="13.500" r="3" fill="#0a0a0a"/><path d="M5 12c3 -5 12 -5.500 16 -0.500" fill="none" stroke="#1a1a1a" stroke-width="1.600"/></svg>
<svg style="left:1729px;top:1359px;" width="5" height="7" viewBox="0 0 5 7"><path d="M0 0v7l5 -3.500z" fill="#8a8a8a"/></svg>
<svg style="left:1736px;top:738px;" width="5" height="50" viewBox="0 0 5 50"><rect x="0" y="0" width="1.200" height="1.200" fill="#7a7a7a"/><rect x="0" y="3" width="1.200" height="1.200" fill="#7a7a7a"/><rect x="0" y="6" width="1.200" height="1.200" fill="#7a7a7a"/><rect x="0" y="9" width="1.200" height="1.200" fill="#7a7a7a"/><rect x="0" y="12" width="1.200" height="1.200" fill="#7a7a7a"/><rect x="0" y="15" width="1.200" height="1.200" fill="#7a7a7a"/><rect x="0" y="18" width="1.200" height="1.200" fill="#7a7a7a"/><rect x="0" y="21" width="1.200" height="1.200" fill="#7a7a7a"/><rect x="2.8" y="0" width="1.200" height="1.200" fill="#7a7a7a"/><rect x="2.8" y="3" width="1.200" height="1.200" fill="#7a7a7a"/><rect x="2.8" y="6" width="1.200" height="1.200" fill="#7a7a7a"/><rect x="2.8" y="9" width="1.200" height="1.200" fill="#7a7a7a"/><rect x="2.8" y="12" width="1.200" height="1.200" fill="#7a7a7a"/><rect x="2.8" y="15" width="1.200" height="1.200" fill="#7a7a7a"/><rect x="2.8" y="18" width="1.200" height="1.200" fill="#7a7a7a"/><rect x="2.8" y="21" width="1.200" height="1.200" fill="#7a7a7a"/></svg>
<svg style="left:1737px;top:695px;" width="4" height="5" viewBox="0 0 4 5"><path d="M3.500 0v5l-3.500 -2.500z" fill="#777"/></svg>
<svg style="left:1737px;top:783px;" width="4" height="5" viewBox="0 0 4 5"><path d="M0 0v5l3.500 -2.500z" fill="#666"/></svg>
<svg style="left:2138px;top:735px;" width="40" height="4" viewBox="0 0 40 4"><rect x="0" y="0" width="1.200" height="1.200" fill="#8a8a8a"/><rect x="0" y="2.5" width="1.200" height="1.200" fill="#8a8a8a"/><rect x="3" y="0" width="1.200" height="1.200" fill="#8a8a8a"/><rect x="3" y="2.5" width="1.200" height="1.200" fill="#8a8a8a"/><rect x="6" y="0" width="1.200" height="1.200" fill="#8a8a8a"/><rect x="6" y="2.5" width="1.200" height="1.200" fill="#8a8a8a"/><rect x="9" y="0" width="1.200" height="1.200" fill="#8a8a8a"/><rect x="9" y="2.5" width="1.200" height="1.200" fill="#8a8a8a"/><rect x="12" y="0" width="1.200" height="1.200" fill="#8a8a8a"/><rect x="12" y="2.5" width="1.200" height="1.200" fill="#8a8a8a"/><rect x="15" y="0" width="1.200" height="1.200" fill="#8a8a8a"/><rect x="15" y="2.5" width="1.200" height="1.200" fill="#8a8a8a"/><rect x="18" y="0" width="1.200" height="1.200" fill="#8a8a8a"/><rect x="18" y="2.5" width="1.200" height="1.200" fill="#8a8a8a"/><rect x="21" y="0" width="1.200" height="1.200" fill="#8a8a8a"/><rect x="21" y="2.5" width="1.200" height="1.200" fill="#8a8a8a"/></svg>
<div style="left:1551.5px;top:210.5px;width:63.0px;height:24.5px;background:rgba(74,88,98,0.62);border:1px solid #b4bdc1;border-radius:12.500px;"></div>
<span class="t" style="top:215.84px;font-size:12.6px;color:#e2e4e6;left:1561.30px;letter-spacing:0.223px;">Persp</span>
<svg style="left:1599.0px;top:222.25px;" width="6" height="3.5" viewBox="0 0 6 3.5"><path d="M0 0h6l-3.0 3.5z" fill="#e8e8e8"/></svg>
<div style="left:1621.5px;top:210.5px;width:74.0px;height:24.5px;background:rgba(74,88,98,0.62);border:1px solid #b4bdc1;border-radius:12.500px;"></div>
<span class="t" style="top:215.84px;font-size:12.6px;color:#e2e4e6;left:1631.60px;letter-spacing:0.482px;">No cam</span>
<svg style="left:1679.5px;top:222.25px;" width="6" height="3.5" viewBox="0 0 6 3.5"><path d="M0 0h6l-3.0 3.5z" fill="#e8e8e8"/></svg>
<svg style="left:66px;top:218px;" width="32" height="30" viewBox="0 0 32 30"><circle cx="9" cy="13" r="6.500" fill="#2a2e31" stroke="#14171a" stroke-width="1"/><circle cx="9" cy="13" r="3" fill="#666c70"/><circle cx="9" cy="13" r="1.200" fill="#1a1a1a"/><circle cx="19" cy="8" r="6" fill="#33383c" stroke="#14171a" stroke-width="1"/><circle cx="19" cy="8" r="2.800" fill="#6a7074"/><circle cx="19" cy="8" r="1.100" fill="#1a1a1a"/><path d="M11 18l10 -4v9l-8 4z" fill="#3a3f43" stroke="#14171a" stroke-width="0.800"/><path d="M21 15.500l8 -2.500v7l-8 1z" fill="#1e2124" stroke="#0c0e10" stroke-width="0.800"/><rect x="14.500" y="19" width="4" height="4" fill="#8a9094"/><rect x="15.800" y="20.300" width="1.500" height="1.500" fill="#1a1a1a"/><path d="M6 21l4 -1l2 5l-4 1.500z" fill="#2a2e31"/></svg>
<span class="t" style="top:223.79px;font-size:16.8px;color:#ffffff;left:109.20px;font-weight:bold;letter-spacing:0.449px;text-shadow:1px 1px 1.500px rgba(0,0,0,0.750);">View</span>
<svg style="left:50px;top:1330px;" width="40" height="40" viewBox="0 0 40 40"><path d="M15.400 24V13.500" stroke="#10f010" stroke-width="1.800"/><path d="M15.400 24l9 4.500" stroke="#f01010" stroke-width="1.800"/><path d="M15.400 24l-5.500 2.500" stroke="#1010f0" stroke-width="1.800"/></svg>
<span class="t" style="top:1332.24px;font-size:13.5px;color:#10f010;left:69.00px;transform:translateX(-50%);font-weight:bold;">y</span>
<span class="t" style="top:1346.94px;font-size:13.5px;color:#f01010;left:78.00px;transform:translateX(-50%);font-weight:bold;">x</span>
<span class="t" style="top:1347.44px;font-size:13.5px;color:#1010f0;left:59.50px;transform:translateX(-50%);font-weight:bold;">z</span>
<svg style="left:2113px;top:735.5px;" width="5" height="4" viewBox="0 0 5 4"><path d="M0 3.500h5l-2.500 -3.500z" fill="#777"/></svg>
<svg style="left:2185px;top:735.5px;" width="5" height="4" viewBox="0 0 5 4"><path d="M0 0h5l-2.500 3.500z" fill="#777"/></svg>
<svg style="left:2170.8px;top:809.5px;" width="22" height="22" viewBox="0 0 22 22"><path d="M3 20.500l11 -12.500" stroke="#e0e0e0" stroke-width="2.800" stroke-linecap="round"/><path d="M12.500 9.500a4.300 4.300 0 0 1 5 -7l-2.500 3l1.500 2.500l3 0.500l1.500 -3a4.300 4.300 0 0 1 -6.500 5.500z" fill="#e4e4e4"/><path d="M3 3.500l2 -1.500l6.500 8l-1.500 1.500z" fill="#d8d8d8"/><path d="M10 10l8.500 8.500a1.800 1.800 0 0 1 -2.500 2.500l-8 -9z" fill="#9a9a9a"/></svg>
<svg style="left:2201.0px;top:809.5px;" width="22" height="22" viewBox="0 0 22 22"><rect x="4" y="1.500" width="4" height="4" fill="#f0f0f0"/><path d="M6 5.500v13.500h6M6 8.500h6M6 13.500h6" fill="none" stroke="#9a9e98" stroke-width="1.400"/><rect x="12" y="6.500" width="5" height="4" fill="#9a9e98"/><rect x="12" y="11.500" width="5" height="4" fill="#9a9e98"/><rect x="12" y="17" width="5" height="4" fill="#9a9e98"/></svg>
<svg style="left:2231.0px;top:809.5px;" width="22" height="22" viewBox="0 0 22 22"><rect x="2.500" y="1.500" width="17.500" height="19.500" fill="#c8ccc4"/><path d="M2.500 3.500h17.500M2.500 8.500h17.500M2.500 13.500h17.500M2.500 18.500h17.500" stroke="#eceee8" stroke-width="2.600"/></svg>
<svg style="left:2281.2px;top:809.5px;" width="22" height="22" viewBox="0 0 22 22"><rect x="1" y="1" width="20" height="20" fill="#f0f0f0" stroke="#6a6a6a" stroke-width="0.800"/><rect x="3" y="3" width="4.500" height="4.500" fill="#d01818"/><rect x="9" y="3" width="4.500" height="4.500" fill="#e87818"/><rect x="15" y="3" width="4.500" height="4.500" fill="#e8c818"/><rect x="3" y="9" width="4.500" height="4.500" fill="#18408a"/><rect x="9" y="9" width="4.500" height="4.500" fill="#48b828"/><rect x="15" y="9" width="4.500" height="4.500" fill="#78a8e0"/><rect x="3" y="15" width="4.500" height="4.500" fill="#0a0a0a"/><rect x="9" y="15" width="4.500" height="4.500" fill="#8a8a8a"/><rect x="15" y="15" width="4.500" height="4.500" fill="#d0d0d0"/></svg>
<svg style="left:2312.0px;top:809.5px;" width="22" height="22" viewBox="0 0 22 22"><rect x="1.200" y="1.200" width="19.600" height="19.600" fill="#3e3e3e" stroke="#8a8a8a" stroke-width="1.300"/><ellipse cx="7" cy="6" rx="3" ry="1.600" fill="#d8d8d8"/><ellipse cx="15.500" cy="6" rx="3" ry="1.600" fill="#d8d8d8"/><path d="M4.500 12.500h5l-1 -2h-3zM13 12.500h5.500l-2.700 -2.500zM4 18h6c-0.500 -2 -5 -2 -6 0zM12.500 18h6.500c-1 -2 -4 -2.500 -6.500 0z" fill="#d8d8d8"/></svg>
<svg style="left:2362.3px;top:809.5px;" width="22" height="22" viewBox="0 0 22 22"><rect x="1" y="1.500" width="20" height="19" fill="#e0e0e0"/><rect x="1" y="1.500" width="20" height="2.600" fill="#6a6a6a"/><rect x="3.500" y="7" width="9" height="4" fill="#fff" stroke="#111" stroke-width="1.300"/><rect x="9.500" y="14" width="9.500" height="4" fill="#fff" stroke="#111" stroke-width="1.300"/></svg>
<svg style="left:2392.8px;top:809.5px;" width="22" height="22" viewBox="0 0 22 22"><path d="M1 1.500h20v13l-6 6.500h-14z" fill="#f0d850" stroke="#b89818" stroke-width="0.900"/><path d="M21 14.500h-6v6.500z" fill="#d8b828"/><path d="M5 6h12M5 9.500h10M5 13h7" stroke="#1a1a1a" stroke-width="1.600"/></svg>
<svg style="left:2421.5px;top:809.0px;" width="23" height="23" viewBox="0 0 22 22"><rect x="0.800" y="1" width="19.500" height="19.500" fill="#4a98e0" stroke="#d8d8d8" stroke-width="1"/><circle cx="6" cy="6.500" r="2.600" fill="#f0d828"/><path d="M1.500 20l6 -8l4 4.500l3 -4l5.500 7.500z" fill="#78c0b0"/><path d="M18.500 14v8M14.500 18h8" stroke="#0a0a0a" stroke-width="3.600"/><path d="M18.500 14.500v7M15 18h7" stroke="#fff" stroke-width="1.600"/></svg>
<svg style="left:2453.0px;top:809.5px;" width="22" height="22" viewBox="0 0 22 22"><path d="M3 9.500h16v9.500h-16z" fill="#e8a048"/><path d="M3 9.500l-2.500 -3.500l5 -3.500h11l5 3.500l-2.500 3.500z" fill="#d08828"/><path d="M5.500 2.500h11l2.500 7h-16z" fill="#b87018"/><path d="M3 9.500h16v2.500h-16z" fill="#c88030"/><path d="M3 19h16" stroke="#a86818" stroke-width="1"/></svg>
<svg style="left:2503.7px;top:809.5px;" width="22" height="22" viewBox="0 0 22 22"><circle cx="8.500" cy="8.500" r="6.500" fill="#4a5a64" stroke="#e8e8e8" stroke-width="1.800"/><path d="M13.500 13.500l7 7" stroke="#e0e0e0" stroke-width="2.400" stroke-linecap="round"/></svg>
<div style="left:2534.5px;top:811px;width:20.5px;height:20px;background:linear-gradient(#8a8a8a 0,#f0f0f0 20%,#e8e8e8 100%);border:1px solid #444;"></div>
<svg style="left:2533.7px;top:810.0px;" width="22" height="22" viewBox="0 0 22 22"><path d="M3 11.500c3.500 -4.500 12 -4.500 16 0c-4 4 -12.500 4 -16 0z" fill="#fafafa" stroke="#1a1a1a" stroke-width="0.900"/><circle cx="11" cy="11.500" r="3" fill="#0a0a0a"/><path d="M3 10c3.500 -5 12 -5.500 16 -0.500" fill="none" stroke="#1a1a1a" stroke-width="1.500"/></svg>
</div></body></html>
